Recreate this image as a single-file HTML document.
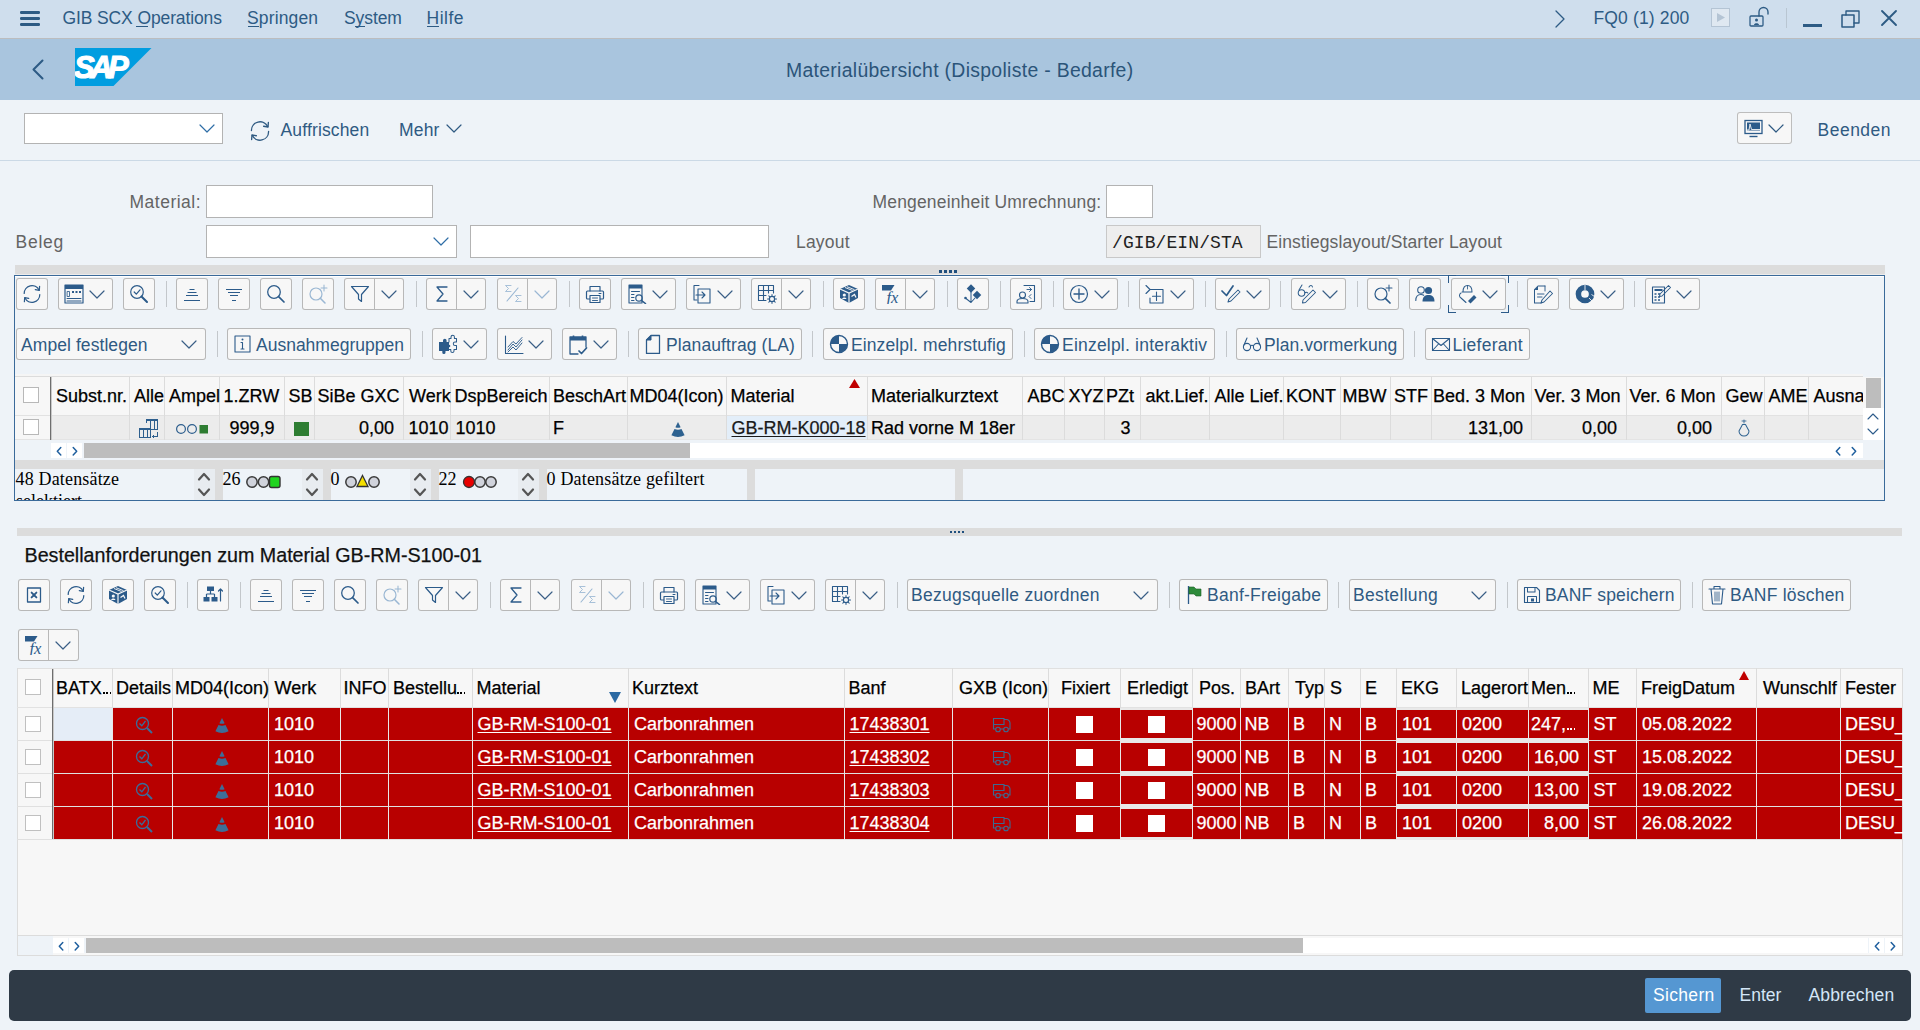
<!DOCTYPE html>
<html><head><meta charset="utf-8"><style>*{margin:0;padding:0;box-sizing:border-box}
html,body{width:1920px;height:1030px;overflow:hidden;background:#eef3f8;font-family:"Liberation Sans",sans-serif}
.a{position:absolute}
.t{position:absolute;white-space:pre;line-height:1}
.b{-webkit-text-stroke:0.25px currentColor}
.u{text-decoration:underline;text-underline-offset:2px}
</style></head><body>
<div class="a" style="left:0px;top:0px;width:1920px;height:38px;background:#cfdeed;"></div>
<div class="a" style="left:0px;top:38px;width:1920px;height:1px;background:#bcbdbf;"></div>
<div class="a" style="left:0px;top:39px;width:1920px;height:61px;background:#a9c5de;"></div>
<div class="a" style="left:20px;top:11px;width:20px;height:2.5px;background:#2d5b84;border-radius:1.2px;"></div>
<div class="a" style="left:20px;top:17px;width:20px;height:2.5px;background:#2d5b84;border-radius:1.2px;"></div>
<div class="a" style="left:20px;top:23px;width:20px;height:2.5px;background:#2d5b84;border-radius:1.2px;"></div>
<div class="t " style="left:62.50px;top:10.19px;font-size:17.5px;color:#2d5b84;letter-spacing:-0.118px;">GIB SCX Operations</div>
<div class="t " style="left:247.00px;top:10.19px;font-size:17.5px;color:#2d5b84;letter-spacing:0.143px;">Springen</div>
<div class="t " style="left:344.00px;top:10.19px;font-size:17.5px;color:#2d5b84;letter-spacing:-0.080px;">System</div>
<div class="t " style="left:426.50px;top:10.19px;font-size:17.5px;color:#2d5b84;letter-spacing:0.500px;">Hilfe</div>
<div class="a" style="left:136px;top:26px;width:12px;height:1px;background:#2d5b84;"></div>
<div class="a" style="left:248px;top:26px;width:11px;height:1px;background:#2d5b84;"></div>
<div class="a" style="left:355px;top:26px;width:10px;height:1px;background:#2d5b84;"></div>
<div class="a" style="left:427px;top:26px;width:12px;height:1px;background:#2d5b84;"></div>
<svg class="a" style="left:1554px;top:9px;" width="12" height="20" viewBox="0 0 12 20"><path d="M2 2L10 10L2 18" fill="none" stroke="#2d5b84" stroke-width="1.27" stroke-linecap="round" stroke-linejoin="round"/></svg>
<div class="t " style="left:1593.50px;top:10.19px;font-size:17.5px;color:#2d5b84;letter-spacing:0.150px;">FQ0 (1) 200</div>
<svg class="a" style="left:1711px;top:8px;" width="20" height="20" viewBox="0 0 20 20"><rect x="0.5" y="0.5" width="18" height="18" fill="#dfe8f1" stroke="#b4c4d4"/><path d="M6 5L14 9.5L6 14Z" fill="#b4c4d4"/></svg>
<svg class="a" style="left:1749px;top:6px;" width="24" height="22" viewBox="0 0 24 22"><rect x="1" y="10" width="13" height="10" rx="1" fill="none" stroke="#2d5b84" stroke-width="1.27" stroke-linecap="round" stroke-linejoin="round"/><path d="M10 10V6A4.5 4.5 0 0 1 19 6V8" fill="none" stroke="#2d5b84" stroke-width="1.36" stroke-linecap="round" stroke-linejoin="round"/><circle cx="7.5" cy="14" r="1.5" fill="#2d5b84"/><path d="M5 19C5 16.5 10 16.5 10 19" fill="#2d5b84"/></svg>
<div class="a" style="left:1786px;top:8px;width:1px;height:20px;background:#b9c6d2;"></div>
<div class="a" style="left:1803px;top:24px;width:19px;height:3px;background:#2d5b84;"></div>
<svg class="a" style="left:1841px;top:8px;" width="20" height="20" viewBox="0 0 20 20"><rect x="1" y="7" width="12" height="12" fill="none" stroke="#2d5b84" stroke-width="1.53" stroke-linecap="round" stroke-linejoin="round"/><path d="M5 7V3H18V15H13" fill="none" stroke="#2d5b84" stroke-width="1.36" stroke-linecap="round" stroke-linejoin="round"/></svg>
<svg class="a" style="left:1880px;top:9px;" width="18" height="18" viewBox="0 0 18 18"><path d="M2 2L16 16M16 2L2 16" fill="none" stroke="#2d5b84" stroke-width="1.87" stroke-linecap="round" stroke-linejoin="round"/></svg>
<svg class="a" style="left:30px;top:58px;" width="16" height="24" viewBox="0 0 16 24"><path d="M12.5 2.5L3.5 11.5L12.5 20.5" fill="none" stroke="#2d5b84" stroke-width="2.04" stroke-linecap="round" stroke-linejoin="round"/></svg>
<svg class="a" style="left:75px;top:48px;" width="77" height="38" viewBox="0 0 77 38"><path d="M0 0H76.5L38.5 38H0Z" fill="#009de0"/><text x="-1" y="30" font-family="Liberation Sans" font-weight="bold" font-style="italic" font-size="31" letter-spacing="-4.5" fill="#fff" stroke="#fff" stroke-width="1.1">SAP</text></svg>
<div class="t " style="left:786.00px;top:60.58px;font-size:19.4px;color:#2b5479;letter-spacing:0.308px;">Materialübersicht (Dispoliste - Bedarfe)</div>
<div class="a" style="left:0px;top:160px;width:1920px;height:1px;background:#cbd9e6;"></div>
<div class="a" style="left:24px;top:113px;width:199px;height:31px;background:#fff;box-shadow:inset 0 0 0 1px #b3b3b3;"></div>
<svg class="a" style="left:199px;top:124px;" width="16" height="9" viewBox="0 0 16 9"><path d="M1 1 L8 8 L15 1" fill="none" stroke="#2f6ea6" stroke-width="1.19" stroke-linecap="round" stroke-linejoin="round"/></svg>
<svg class="a" style="left:249px;top:120px;" width="22" height="22" viewBox="0 0 20 20"><path d="M2.2 9.5A7.8 7.8 0 0 1 17 6" fill="none" stroke="#2f5a82" stroke-width="1.23" stroke-linecap="round" stroke-linejoin="round"/><path d="M17.6 2.3L17.3 6.4L13.3 5.7" fill="none" stroke="#2f5a82" stroke-width="1.23" stroke-linecap="round" stroke-linejoin="round"/><path d="M17.8 10.5A7.8 7.8 0 0 1 3 14" fill="none" stroke="#2f5a82" stroke-width="1.23" stroke-linecap="round" stroke-linejoin="round"/><path d="M2.4 17.7L2.7 13.6L6.7 14.3" fill="none" stroke="#2f5a82" stroke-width="1.23" stroke-linecap="round" stroke-linejoin="round"/></svg>
<div class="t " style="left:280.50px;top:121.69px;font-size:17.5px;color:#2f5a82;letter-spacing:0.150px;">Auffrischen</div>
<div class="t " style="left:399.00px;top:121.69px;font-size:17.5px;color:#2f5a82;letter-spacing:0.167px;">Mehr</div>
<svg class="a" style="left:446px;top:124px;" width="16" height="9" viewBox="0 0 16 9"><path d="M1 1 L8 8 L15 1" fill="none" stroke="#2f5a82" stroke-width="1.19" stroke-linecap="round" stroke-linejoin="round"/></svg>
<div class="a" style="left:1737px;top:112px;width:55px;height:32px;background:#f7f7f7;box-shadow:inset 0 0 0 1px #bdbdbd;border-radius:3px;"></div>
<svg class="a" style="left:1744px;top:119px;" width="20" height="20" viewBox="0 0 20 20"><rect x="1" y="1.5" width="17" height="13" fill="none" stroke="#2c5b8a" stroke-width="1.3"/><rect x="3" y="3.5" width="13" height="8" fill="#2c5b8a"/><path d="M2.5 11H5L6 5L7.5 10.5H16" fill="none" stroke="#f7f7f7" stroke-width="0.9"/><path d="M5.5 17.5H13.5" stroke="#2c5b8a" stroke-width="1.4"/></svg>
<svg class="a" style="left:1768px;top:124px;" width="16" height="9" viewBox="0 0 16 9"><path d="M1 1 L8 8 L15 1" fill="none" stroke="#2f5a82" stroke-width="1.19" stroke-linecap="round" stroke-linejoin="round"/></svg>
<div class="t " style="left:1817.50px;top:121.69px;font-size:17.5px;color:#2f5a82;letter-spacing:0.500px;">Beenden</div>
<div class="t " style="left:129.50px;top:194.19px;font-size:17.5px;color:#646464;letter-spacing:0.500px;">Material:</div>
<div class="a" style="left:206px;top:185px;width:227px;height:33px;background:#fff;box-shadow:inset 0 0 0 1px #b3b3b3;"></div>
<div class="t " style="left:872.50px;top:194.19px;font-size:17.5px;color:#646464;letter-spacing:0.167px;">Mengeneinheit Umrechnung:</div>
<div class="a" style="left:1106px;top:185px;width:47px;height:33px;background:#fff;box-shadow:inset 0 0 0 1px #b3b3b3;"></div>
<div class="t " style="left:15.50px;top:234.19px;font-size:17.5px;color:#646464;letter-spacing:0.750px;">Beleg</div>
<div class="a" style="left:206px;top:225px;width:251px;height:33px;background:#fff;box-shadow:inset 0 0 0 1px #b3b3b3;"></div>
<svg class="a" style="left:433px;top:237px;" width="16" height="9" viewBox="0 0 16 9"><path d="M1 1 L8 8 L15 1" fill="none" stroke="#2f6ea6" stroke-width="1.19" stroke-linecap="round" stroke-linejoin="round"/></svg>
<div class="a" style="left:470px;top:225px;width:299px;height:33px;background:#fff;box-shadow:inset 0 0 0 1px #b3b3b3;"></div>
<div class="t " style="left:796.00px;top:234.19px;font-size:17.5px;color:#646464;letter-spacing:0.200px;">Layout</div>
<div class="a" style="left:1106px;top:225px;width:155px;height:33px;background:#eeeeee;box-shadow:inset 0 0 0 1px #c8c8c8;"></div>
<div class="t " style="left:1112.00px;top:234.20px;font-size:18px;color:#222;font-family:'Liberation Mono';letter-spacing:0.091px;">/GIB/EIN/STA</div>
<div class="t " style="left:1266.50px;top:234.19px;font-size:17.5px;color:#646464;letter-spacing:0.103px;">Einstiegslayout/Starter Layout</div>
<div class="a" style="left:15px;top:265px;width:1870px;height:10px;background:#dcdcdc;"></div>
<div class="a" style="left:939px;top:270px;width:3px;height:3px;background:#1f4f7e;"></div>
<div class="a" style="left:944px;top:270px;width:3px;height:3px;background:#1f4f7e;"></div>
<div class="a" style="left:949px;top:270px;width:3px;height:3px;background:#1f4f7e;"></div>
<div class="a" style="left:954px;top:270px;width:3px;height:3px;background:#1f4f7e;"></div>
<div class="a" style="left:15px;top:274px;width:1870px;height:1px;background:#ececec;"></div>
<div class="a" style="left:14px;top:275px;width:1871px;height:226px;box-shadow:inset 0 0 0 1px #3a6a9a;"></div>
<div class="a" style="left:15px;top:276px;width:1869px;height:1px;background:#ffffff;"></div>
<div class="a" style="left:16px;top:278px;width:32px;height:32px;background:#f7f7f7;box-shadow:inset 0 0 0 1px #b8b8b8;border-radius:3px;"></div>
<svg class="a" style="left:22px;top:284px;" width="20" height="20" viewBox="0 0 20 20"><path d="M2.2 9.5A7.8 7.8 0 0 1 17 6" fill="none" stroke="#2c5b8a" stroke-width="1.23" stroke-linecap="round" stroke-linejoin="round"/><path d="M17.6 2.3L17.3 6.4L13.3 5.7" fill="none" stroke="#2c5b8a" stroke-width="1.23" stroke-linecap="round" stroke-linejoin="round"/><path d="M17.8 10.5A7.8 7.8 0 0 1 3 14" fill="none" stroke="#2c5b8a" stroke-width="1.23" stroke-linecap="round" stroke-linejoin="round"/><path d="M2.4 17.7L2.7 13.6L6.7 14.3" fill="none" stroke="#2c5b8a" stroke-width="1.23" stroke-linecap="round" stroke-linejoin="round"/></svg>
<div class="a" style="left:58px;top:278px;width:55px;height:32px;background:#f7f7f7;box-shadow:inset 0 0 0 1px #b8b8b8;border-radius:3px;"></div>
<svg class="a" style="left:64px;top:284px;" width="20" height="20" viewBox="0 0 20 20"><rect x="1" y="1" width="18" height="18" fill="none" stroke="#2c5b8a" stroke-width="1.19" stroke-linecap="round" stroke-linejoin="round"/><rect x="1" y="1" width="18" height="4" fill="#2c5b8a"/><rect x="3.5" y="7.5" width="2" height="5" fill="none" stroke="#2c5b8a" stroke-width="0.85" stroke-linecap="round" stroke-linejoin="round"/><rect x="8" y="7" width="2" height="2" fill="#2c5b8a"/><rect x="11.5" y="7" width="2" height="2" fill="#2c5b8a"/><rect x="15" y="7" width="2" height="2" fill="#2c5b8a"/><path d="M3 14.5H17M3 17H17" fill="none" stroke="#2c5b8a" stroke-width="1.02" stroke-linecap="round" stroke-linejoin="round"/></svg>
<svg class="a" style="left:89px;top:290px;" width="16" height="9" viewBox="0 0 16 9"><path d="M1 1 L8 8 L15 1" fill="none" stroke="#3a5f86" stroke-width="1.19" stroke-linecap="round" stroke-linejoin="round"/></svg>
<div class="a" style="left:123px;top:278px;width:32px;height:32px;background:#f7f7f7;box-shadow:inset 0 0 0 1px #b8b8b8;border-radius:3px;"></div>
<svg class="a" style="left:129px;top:284px;" width="20" height="20" viewBox="0 0 20 20"><circle cx="8" cy="8" r="6.3" fill="none" stroke="#2c5b8a" stroke-width="1.19" stroke-linecap="round" stroke-linejoin="round"/><path d="M5.2 8 L7.3 10.2 L11 5.8" fill="none" stroke="#2c5b8a" stroke-width="1.19" stroke-linecap="round" stroke-linejoin="round"/><path d="M12.5 12.5 L18 18" fill="none" stroke="#2c5b8a" stroke-width="2.04" stroke-linecap="round" stroke-linejoin="round"/></svg>
<div class="a" style="left:166px;top:281px;width:1px;height:26px;background:#c3c7cb;"></div>
<div class="a" style="left:176px;top:278px;width:32px;height:32px;background:#f7f7f7;box-shadow:inset 0 0 0 1px #b8b8b8;border-radius:3px;"></div>
<svg class="a" style="left:182px;top:284px;" width="20" height="20" viewBox="0 0 20 20"><path d="M7.5 5.5H12.5M5.5 8.5H14.5M4 11.5H16M2 16.5H18" fill="none" stroke="#2c5b8a" stroke-width="1.1"/></svg>
<div class="a" style="left:218px;top:278px;width:32px;height:32px;background:#f7f7f7;box-shadow:inset 0 0 0 1px #b8b8b8;border-radius:3px;"></div>
<svg class="a" style="left:224px;top:284px;" width="20" height="20" viewBox="0 0 20 20"><path d="M2 5.5H18M4 8.5H16M6 11.5H14M8 16.5H12" fill="none" stroke="#2c5b8a" stroke-width="1.1"/></svg>
<div class="a" style="left:260px;top:278px;width:32px;height:32px;background:#f7f7f7;box-shadow:inset 0 0 0 1px #b8b8b8;border-radius:3px;"></div>
<svg class="a" style="left:266px;top:284px;" width="20" height="20" viewBox="0 0 20 20"><circle cx="8" cy="8" r="6.3" fill="none" stroke="#2c5b8a" stroke-width="1.27" stroke-linecap="round" stroke-linejoin="round"/><path d="M12.6 12.6 L18 18" fill="none" stroke="#2c5b8a" stroke-width="1.70" stroke-linecap="round" stroke-linejoin="round"/></svg>
<div class="a" style="left:302px;top:278px;width:32px;height:32px;background:#f7f7f7;box-shadow:inset 0 0 0 1px #b8b8b8;border-radius:3px;"></div>
<svg class="a" style="left:308px;top:284px;" width="20" height="20" viewBox="0 0 20 20"><circle cx="8" cy="10" r="6" fill="none" stroke="#9ab7d3" stroke-width="1.19" stroke-linecap="round" stroke-linejoin="round"/><path d="M12.3 14.3 L17 19" fill="none" stroke="#9ab7d3" stroke-width="1.53" stroke-linecap="round" stroke-linejoin="round"/><path d="M16 1V7M13 4H19" fill="none" stroke="#9ab7d3" stroke-width="1.02" stroke-linecap="round" stroke-linejoin="round"/></svg>
<div class="a" style="left:344px;top:278px;width:60px;height:32px;background:#f7f7f7;box-shadow:inset 0 0 0 1px #b8b8b8;border-radius:3px;"></div>
<svg class="a" style="left:350px;top:284px;" width="20" height="20" viewBox="0 0 20 20"><path d="M1.5 2.5H18.5L11.5 10.5V17.5L8.5 15V10.5Z" fill="none" stroke="#2c5b8a" stroke-width="1.19" stroke-linecap="round" stroke-linejoin="round"/></svg>
<div class="a" style="left:374px;top:279px;width:1px;height:30px;background:#b8b8b8;"></div>
<svg class="a" style="left:381px;top:290px;" width="16" height="9" viewBox="0 0 16 9"><path d="M1 1 L8 8 L15 1" fill="none" stroke="#3a5f86" stroke-width="1.19" stroke-linecap="round" stroke-linejoin="round"/></svg>
<div class="a" style="left:416px;top:281px;width:1px;height:26px;background:#c3c7cb;"></div>
<div class="a" style="left:426px;top:278px;width:60px;height:32px;background:#f7f7f7;box-shadow:inset 0 0 0 1px #b8b8b8;border-radius:3px;"></div>
<svg class="a" style="left:432px;top:284px;" width="20" height="20" viewBox="0 0 20 20"><path d="M15 3H5L11 10L5 17H15" fill="none" stroke="#2c5b8a" stroke-width="1.27" stroke-linecap="round" stroke-linejoin="round"/></svg>
<div class="a" style="left:456px;top:279px;width:1px;height:30px;background:#b8b8b8;"></div>
<svg class="a" style="left:463px;top:290px;" width="16" height="9" viewBox="0 0 16 9"><path d="M1 1 L8 8 L15 1" fill="none" stroke="#3a5f86" stroke-width="1.19" stroke-linecap="round" stroke-linejoin="round"/></svg>
<div class="a" style="left:497px;top:278px;width:60px;height:32px;background:#f7f7f7;box-shadow:inset 0 0 0 1px #b8b8b8;border-radius:3px;"></div>
<svg class="a" style="left:503px;top:284px;" width="20" height="20" viewBox="0 0 20 20"><path d="M8 1.5H2.5L5.5 4.5L2.5 7.5H8" fill="none" stroke="#9ab7d3" stroke-width="0.85" stroke-linecap="round" stroke-linejoin="round"/><path d="M4 17L15 4" fill="none" stroke="#9ab7d3" stroke-width="1.10" stroke-linecap="round" stroke-linejoin="round"/><path d="M18 11.5H12.5L15.5 14.5L12.5 17.5H18" fill="none" stroke="#9ab7d3" stroke-width="0.85" stroke-linecap="round" stroke-linejoin="round"/></svg>
<div class="a" style="left:527px;top:279px;width:1px;height:30px;background:#b8b8b8;"></div>
<svg class="a" style="left:534px;top:290px;" width="16" height="9" viewBox="0 0 16 9"><path d="M1 1 L8 8 L15 1" fill="none" stroke="#9ab7d3" stroke-width="1.19" stroke-linecap="round" stroke-linejoin="round"/></svg>
<div class="a" style="left:569px;top:281px;width:1px;height:26px;background:#c3c7cb;"></div>
<div class="a" style="left:579px;top:278px;width:32px;height:32px;background:#f7f7f7;box-shadow:inset 0 0 0 1px #b8b8b8;border-radius:3px;"></div>
<svg class="a" style="left:585px;top:284px;" width="20" height="20" viewBox="0 0 20 20"><path d="M5 7V2.5H15V7" fill="none" stroke="#2c5b8a" stroke-width="1.19" stroke-linecap="round" stroke-linejoin="round"/><rect x="1.5" y="7" width="17" height="8" rx="1" fill="none" stroke="#2c5b8a" stroke-width="1.19" stroke-linecap="round" stroke-linejoin="round"/><rect x="5" y="11.5" width="10" height="7" fill="#f7f7f7" fill="none" stroke="#2c5b8a" stroke-width="1.19" stroke-linecap="round" stroke-linejoin="round"/><path d="M7.5 14H12.5M7.5 16.5H12.5" fill="none" stroke="#2c5b8a" stroke-width="0.94" stroke-linecap="round" stroke-linejoin="round"/><path d="M14 9.5H16" fill="none" stroke="#2c5b8a" stroke-width="1.02" stroke-linecap="round" stroke-linejoin="round"/></svg>
<div class="a" style="left:621px;top:278px;width:55px;height:32px;background:#f7f7f7;box-shadow:inset 0 0 0 1px #b8b8b8;border-radius:3px;"></div>
<svg class="a" style="left:627px;top:284px;" width="20" height="20" viewBox="0 0 20 20"><rect x="2" y="1" width="13" height="18" fill="none" stroke="#2c5b8a" stroke-width="1.10" stroke-linecap="round" stroke-linejoin="round"/><rect x="2" y="1" width="13" height="3.5" fill="#2c5b8a"/><path d="M4.5 7.5H12.5M4.5 10.5H7M4.5 13.5H7M4.5 16.5H7" fill="none" stroke="#2c5b8a" stroke-width="1.02" stroke-linecap="round" stroke-linejoin="round"/><circle cx="12" cy="14" r="3.2" fill="none" stroke="#2c5b8a" stroke-width="1.19" stroke-linecap="round" stroke-linejoin="round"/><path d="M14.3 16.3L18.5 19.5" fill="none" stroke="#2c5b8a" stroke-width="1.53" stroke-linecap="round" stroke-linejoin="round"/></svg>
<svg class="a" style="left:652px;top:290px;" width="16" height="9" viewBox="0 0 16 9"><path d="M1 1 L8 8 L15 1" fill="none" stroke="#3a5f86" stroke-width="1.19" stroke-linecap="round" stroke-linejoin="round"/></svg>
<div class="a" style="left:686px;top:278px;width:55px;height:32px;background:#f7f7f7;box-shadow:inset 0 0 0 1px #b8b8b8;border-radius:3px;"></div>
<svg class="a" style="left:692px;top:284px;" width="20" height="20" viewBox="0 0 20 20"><path d="M7 1.5H2V16H5" fill="none" stroke="#2c5b8a" stroke-width="1.10" stroke-linecap="round" stroke-linejoin="round"/><rect x="6" y="5" width="12" height="14" fill="none" stroke="#2c5b8a" stroke-width="1.10" stroke-linecap="round" stroke-linejoin="round"/><path d="M4 11H13M10 8L13 11L10 14" fill="none" stroke="#2c5b8a" stroke-width="1.10" stroke-linecap="round" stroke-linejoin="round"/></svg>
<svg class="a" style="left:717px;top:290px;" width="16" height="9" viewBox="0 0 16 9"><path d="M1 1 L8 8 L15 1" fill="none" stroke="#3a5f86" stroke-width="1.19" stroke-linecap="round" stroke-linejoin="round"/></svg>
<div class="a" style="left:751px;top:278px;width:60px;height:32px;background:#f7f7f7;box-shadow:inset 0 0 0 1px #b8b8b8;border-radius:3px;"></div>
<svg class="a" style="left:757px;top:284px;" width="20" height="20" viewBox="0 0 20 20"><path d="M1.5 1.5H16.5V9M1.5 1.5V16.5H9M1.5 6.5H16.5M1.5 11.5H9M6.5 1.5V16.5M11.5 1.5V9" fill="none" stroke="#2c5b8a" stroke-width="1.10" stroke-linecap="round" stroke-linejoin="round"/><circle cx="15" cy="15" r="2.6" fill="none" stroke="#2c5b8a" stroke-width="1.19" stroke-linecap="round" stroke-linejoin="round"/><path d="M15 10.5V11.8M15 18.2V19.5M10.5 15H11.8M18.2 15H19.5M11.8 11.8L12.7 12.7M17.3 17.3L18.2 18.2M11.8 18.2L12.7 17.3M17.3 12.7L18.2 11.8" fill="none" stroke="#2c5b8a" stroke-width="1.02" stroke-linecap="round" stroke-linejoin="round"/></svg>
<div class="a" style="left:781px;top:279px;width:1px;height:30px;background:#b8b8b8;"></div>
<svg class="a" style="left:788px;top:290px;" width="16" height="9" viewBox="0 0 16 9"><path d="M1 1 L8 8 L15 1" fill="none" stroke="#3a5f86" stroke-width="1.19" stroke-linecap="round" stroke-linejoin="round"/></svg>
<div class="a" style="left:823px;top:281px;width:1px;height:26px;background:#c3c7cb;"></div>
<div class="a" style="left:833px;top:278px;width:32px;height:32px;background:#f7f7f7;box-shadow:inset 0 0 0 1px #b8b8b8;border-radius:3px;"></div>
<svg class="a" style="left:839px;top:284px;" width="20" height="20" viewBox="0 0 20 20"><path d="M10 1L19 5V14L10 19L1 14V5Z" fill="#2c5b8a"/><path d="M1 5L10 9L19 5M10 9V19" fill="none" stroke="#f7f7f7" stroke-width="1.2"/><path d="M6 3.5L13.5 6.5M8 2.7L15.5 5.7" stroke="#f7f7f7" stroke-width="0.9"/><circle cx="5.3" cy="11" r="1.6" fill="#f7f7f7"/><path d="M3.2 15C3.2 13 7.4 13 7.4 15" fill="#f7f7f7"/><path d="M12.5 12.5L15.5 10.5L17 13.5" fill="none" stroke="#f7f7f7" stroke-width="1.2"/></svg>
<div class="a" style="left:875px;top:278px;width:60px;height:32px;background:#f7f7f7;box-shadow:inset 0 0 0 1px #b8b8b8;border-radius:3px;"></div>
<svg class="a" style="left:881px;top:284px;" width="20" height="20" viewBox="0 0 20 20"><path d="M1 1H13.5L10 6.5H1Z" fill="#2c5b8a"/><text x="5.5" y="18.5" font-family="Liberation Serif" font-style="italic" font-size="16.5" fill="#2c5b8a">fx</text></svg>
<div class="a" style="left:905px;top:279px;width:1px;height:30px;background:#b8b8b8;"></div>
<svg class="a" style="left:912px;top:290px;" width="16" height="9" viewBox="0 0 16 9"><path d="M1 1 L8 8 L15 1" fill="none" stroke="#3a5f86" stroke-width="1.19" stroke-linecap="round" stroke-linejoin="round"/></svg>
<div class="a" style="left:947px;top:281px;width:1px;height:26px;background:#c3c7cb;"></div>
<div class="a" style="left:957px;top:278px;width:32px;height:32px;background:#f7f7f7;box-shadow:inset 0 0 0 1px #b8b8b8;border-radius:3px;"></div>
<svg class="a" style="left:963px;top:284px;" width="20" height="20" viewBox="0 0 20 20"><rect x="5" y="1.5" width="6" height="6" transform="rotate(45 8 4.5)" fill="#2c5b8a"/><rect x="11" y="8" width="6" height="6" transform="rotate(45 14 11)" fill="#2c5b8a"/><path d="M8 8V18.5M8 18.5L3 14.5M8 18.5L12 14" fill="none" stroke="#2c5b8a" stroke-width="1.02" stroke-linecap="round" stroke-linejoin="round"/><circle cx="2.5" cy="14" r="1.3" fill="#2c5b8a"/></svg>
<div class="a" style="left:1000px;top:281px;width:1px;height:26px;background:#c3c7cb;"></div>
<div class="a" style="left:1010px;top:278px;width:32px;height:32px;background:#f7f7f7;box-shadow:inset 0 0 0 1px #b8b8b8;border-radius:3px;"></div>
<svg class="a" style="left:1016px;top:284px;" width="20" height="20" viewBox="0 0 20 20"><path d="M8 1.5H18.5V17.5H14" fill="none" stroke="#2c5b8a" stroke-width="1.10" stroke-linecap="round" stroke-linejoin="round"/><path d="M11 5.5H15.5M13.5 3.5L15.5 5.5L13.5 7.5M15 10.5L13 12.5L15 14.5" fill="none" stroke="#2c5b8a" stroke-width="0.94" stroke-linecap="round" stroke-linejoin="round"/><circle cx="6.5" cy="11" r="3" fill="none" stroke="#2c5b8a" stroke-width="1.10" stroke-linecap="round" stroke-linejoin="round"/><path d="M1 19V17.5C1 15.5 3 14.5 6.5 14.5C10 14.5 12 15.5 12 17.5V19Z" fill="none" stroke="#2c5b8a" stroke-width="1.10" stroke-linecap="round" stroke-linejoin="round"/></svg>
<div class="a" style="left:1053px;top:281px;width:1px;height:26px;background:#c3c7cb;"></div>
<div class="a" style="left:1063px;top:278px;width:55px;height:32px;background:#f7f7f7;box-shadow:inset 0 0 0 1px #b8b8b8;border-radius:3px;"></div>
<svg class="a" style="left:1069px;top:284px;" width="20" height="20" viewBox="0 0 20 20"><circle cx="10" cy="10" r="8.5" fill="none" stroke="#2c5b8a" stroke-width="1.19" stroke-linecap="round" stroke-linejoin="round"/><path d="M10 5V15M5 10H15" fill="none" stroke="#2c5b8a" stroke-width="1.36" stroke-linecap="round" stroke-linejoin="round"/></svg>
<svg class="a" style="left:1094px;top:290px;" width="16" height="9" viewBox="0 0 16 9"><path d="M1 1 L8 8 L15 1" fill="none" stroke="#3a5f86" stroke-width="1.19" stroke-linecap="round" stroke-linejoin="round"/></svg>
<div class="a" style="left:1128px;top:281px;width:1px;height:26px;background:#c3c7cb;"></div>
<div class="a" style="left:1139px;top:278px;width:55px;height:32px;background:#f7f7f7;box-shadow:inset 0 0 0 1px #b8b8b8;border-radius:3px;"></div>
<svg class="a" style="left:1145px;top:284px;" width="20" height="20" viewBox="0 0 20 20"><path d="M1 1.5L5 5.5L1 9.5M5 5.5H18V19H5V14" fill="none" stroke="#2c5b8a" stroke-width="1.10" stroke-linecap="round" stroke-linejoin="round"/><path d="M11.5 8V16.5M7.5 12.2H15.5" fill="none" stroke="#2c5b8a" stroke-width="1.10" stroke-linecap="round" stroke-linejoin="round"/></svg>
<svg class="a" style="left:1170px;top:290px;" width="16" height="9" viewBox="0 0 16 9"><path d="M1 1 L8 8 L15 1" fill="none" stroke="#3a5f86" stroke-width="1.19" stroke-linecap="round" stroke-linejoin="round"/></svg>
<div class="a" style="left:1205px;top:281px;width:1px;height:26px;background:#c3c7cb;"></div>
<div class="a" style="left:1215px;top:278px;width:55px;height:32px;background:#f7f7f7;box-shadow:inset 0 0 0 1px #b8b8b8;border-radius:3px;"></div>
<svg class="a" style="left:1221px;top:284px;" width="20" height="20" viewBox="0 0 20 20"><path d="M1 7L5.5 11.5L12 2" fill="none" stroke="#2c5b8a" stroke-width="1.70" stroke-linecap="round" stroke-linejoin="round"/><path d="M17 6L19 8L10 17L7 18L8 15Z" fill="none" stroke="#2c5b8a" stroke-width="1.02" stroke-linecap="round" stroke-linejoin="round"/></svg>
<svg class="a" style="left:1246px;top:290px;" width="16" height="9" viewBox="0 0 16 9"><path d="M1 1 L8 8 L15 1" fill="none" stroke="#3a5f86" stroke-width="1.19" stroke-linecap="round" stroke-linejoin="round"/></svg>
<div class="a" style="left:1280px;top:281px;width:1px;height:26px;background:#c3c7cb;"></div>
<div class="a" style="left:1291px;top:278px;width:55px;height:32px;background:#f7f7f7;box-shadow:inset 0 0 0 1px #b8b8b8;border-radius:3px;"></div>
<svg class="a" style="left:1297px;top:284px;" width="20" height="20" viewBox="0 0 20 20"><circle cx="4.5" cy="9" r="3.3" fill="none" stroke="#2c5b8a" stroke-width="1.02" stroke-linecap="round" stroke-linejoin="round"/><path d="M7.8 9C8.5 8 10 8 10.8 9" fill="none" stroke="#2c5b8a" stroke-width="1.02" stroke-linecap="round" stroke-linejoin="round"/><path d="M2 6L5 1M12 3C13 1 15 1 15.5 3" fill="none" stroke="#2c5b8a" stroke-width="1.02" stroke-linecap="round" stroke-linejoin="round"/><path d="M16 6L18.5 8.5L8.5 18.5L5.5 19L6 16Z" fill="none" stroke="#2c5b8a" stroke-width="1.02" stroke-linecap="round" stroke-linejoin="round"/></svg>
<svg class="a" style="left:1322px;top:290px;" width="16" height="9" viewBox="0 0 16 9"><path d="M1 1 L8 8 L15 1" fill="none" stroke="#3a5f86" stroke-width="1.19" stroke-linecap="round" stroke-linejoin="round"/></svg>
<div class="a" style="left:1357px;top:281px;width:1px;height:26px;background:#c3c7cb;"></div>
<div class="a" style="left:1367px;top:278px;width:32px;height:32px;background:#f7f7f7;box-shadow:inset 0 0 0 1px #b8b8b8;border-radius:3px;"></div>
<svg class="a" style="left:1373px;top:284px;" width="20" height="20" viewBox="0 0 20 20"><circle cx="8" cy="10" r="6" fill="none" stroke="#2c5b8a" stroke-width="1.19" stroke-linecap="round" stroke-linejoin="round"/><path d="M12.3 14.3L17 19" fill="none" stroke="#2c5b8a" stroke-width="1.70" stroke-linecap="round" stroke-linejoin="round"/><path d="M16 1V7M13 4H19" fill="none" stroke="#2c5b8a" stroke-width="1.02" stroke-linecap="round" stroke-linejoin="round"/></svg>
<div class="a" style="left:1409px;top:278px;width:32px;height:32px;background:#f7f7f7;box-shadow:inset 0 0 0 1px #b8b8b8;border-radius:3px;"></div>
<svg class="a" style="left:1415px;top:284px;" width="20" height="20" viewBox="0 0 20 20"><circle cx="6" cy="6" r="3.3" fill="none" stroke="#2c5b8a" stroke-width="1.10" stroke-linecap="round" stroke-linejoin="round"/><path d="M0.8 16.5C0.8 12 3 10.5 6 10.5C7 10.5 8 10.8 8.7 11.3" fill="none" stroke="#2c5b8a" stroke-width="1.10" stroke-linecap="round" stroke-linejoin="round"/><circle cx="13.5" cy="6.5" r="3.6" fill="#2c5b8a"/><path d="M7.5 17.5C7.5 12.5 10 11 13.5 11C17 11 19.5 12.5 19.5 17.5Z" fill="#2c5b8a"/></svg>
<div class="a" style="left:1451px;top:278px;width:55px;height:32px;background:#f7f7f7;box-shadow:inset 0 0 0 1px #b8b8b8;border-radius:3px;"></div>
<svg class="a" style="left:1457px;top:284px;" width="20" height="20" viewBox="0 0 20 20"><path d="M6 8C6 3 8 1.5 10.5 1.5C13 1.5 15 3 15 8H5" fill="none" stroke="#2c5b8a" stroke-width="1.02" stroke-linecap="round" stroke-linejoin="round"/><path d="M10.5 1.5V5" fill="none" stroke="#2c5b8a" stroke-width="0.85" stroke-linecap="round" stroke-linejoin="round"/><path d="M4 9C2 10 2 13 4 14L9 18.5" fill="none" stroke="#2c5b8a" stroke-width="1.02" stroke-linecap="round" stroke-linejoin="round"/><path d="M11 17L17 11L19.5 13.5L13.5 19.5Z" fill="#2c5b8a"/></svg>
<svg class="a" style="left:1482px;top:290px;" width="16" height="9" viewBox="0 0 16 9"><path d="M1 1 L8 8 L15 1" fill="none" stroke="#3a5f86" stroke-width="1.19" stroke-linecap="round" stroke-linejoin="round"/></svg>
<svg class="a" style="left:1448px;top:275px;" width="8" height="8" viewBox="0 0 8 8"><path d="M0 8V0H8" fill="none" stroke="#2c5b8a" stroke-width="2"/></svg>
<svg class="a" style="left:1501px;top:275px;" width="8" height="8" viewBox="0 0 8 8"><path d="M0 0H8V8" fill="none" stroke="#2c5b8a" stroke-width="2"/></svg>
<svg class="a" style="left:1448px;top:305px;" width="8" height="8" viewBox="0 0 8 8"><path d="M0 0V8H8" fill="none" stroke="#2c5b8a" stroke-width="2"/></svg>
<svg class="a" style="left:1501px;top:305px;" width="8" height="8" viewBox="0 0 8 8"><path d="M8 0V8H0" fill="none" stroke="#2c5b8a" stroke-width="2"/></svg>
<div class="a" style="left:1517px;top:281px;width:1px;height:26px;background:#c3c7cb;"></div>
<div class="a" style="left:1527px;top:278px;width:32px;height:32px;background:#f7f7f7;box-shadow:inset 0 0 0 1px #b8b8b8;border-radius:3px;"></div>
<svg class="a" style="left:1533px;top:284px;" width="20" height="20" viewBox="0 0 20 20"><path d="M12 2H5L1.5 5.5V19H8" fill="none" stroke="#2c5b8a" stroke-width="1.02" stroke-linecap="round" stroke-linejoin="round"/><path d="M5 2V6H1.5Z" fill="#2c5b8a"/><path d="M4.5 10H11M4.5 13H9M12 2V7" fill="none" stroke="#2c5b8a" stroke-width="0.94" stroke-linecap="round" stroke-linejoin="round"/><path d="M17 7L19.5 9.5L11 18L8 19L9 16Z" fill="none" stroke="#2c5b8a" stroke-width="1.02" stroke-linecap="round" stroke-linejoin="round"/></svg>
<div class="a" style="left:1569px;top:278px;width:55px;height:32px;background:#f7f7f7;box-shadow:inset 0 0 0 1px #b8b8b8;border-radius:3px;"></div>
<svg class="a" style="left:1575px;top:284px;" width="20" height="20" viewBox="0 0 20 20"><circle cx="10" cy="10" r="6.6" fill="none" stroke="#2c5b8a" stroke-width="5.5"/><path d="M10 1V6M16.5 10.5L19.5 12.5M14 14L17 17" stroke="#f7f7f7" stroke-width="0.9"/></svg>
<svg class="a" style="left:1600px;top:290px;" width="16" height="9" viewBox="0 0 16 9"><path d="M1 1 L8 8 L15 1" fill="none" stroke="#3a5f86" stroke-width="1.19" stroke-linecap="round" stroke-linejoin="round"/></svg>
<div class="a" style="left:1634px;top:281px;width:1px;height:26px;background:#c3c7cb;"></div>
<div class="a" style="left:1645px;top:278px;width:55px;height:32px;background:#f7f7f7;box-shadow:inset 0 0 0 1px #b8b8b8;border-radius:3px;"></div>
<svg class="a" style="left:1651px;top:284px;" width="20" height="20" viewBox="0 0 20 20"><rect x="1.5" y="3" width="12" height="16" fill="none" stroke="#2c5b8a" stroke-width="1.10" stroke-linecap="round" stroke-linejoin="round"/><rect x="3.5" y="5" width="8" height="2" fill="#2c5b8a"/><path d="M3.5 10H5.5M7 10H9M3.5 13H5.5M7 13H9M3.5 16H5.5M7 16H9" stroke="#2c5b8a" stroke-width="1.6"/><path d="M17.5 1.5L19.5 3.5L11 12L8.5 12.5L9 10Z" fill="none" stroke="#2c5b8a" stroke-width="1.02" stroke-linecap="round" stroke-linejoin="round"/></svg>
<svg class="a" style="left:1676px;top:290px;" width="16" height="9" viewBox="0 0 16 9"><path d="M1 1 L8 8 L15 1" fill="none" stroke="#3a5f86" stroke-width="1.19" stroke-linecap="round" stroke-linejoin="round"/></svg>
<div class="a" style="left:16px;top:328px;width:190px;height:32px;background:#f7f7f7;box-shadow:inset 0 0 0 1px #b8b8b8;border-radius:3px;"></div>
<div class="t " style="left:21.00px;top:337.19px;font-size:17.5px;color:#2f5a82;letter-spacing:0.071px;">Ampel festlegen</div>
<svg class="a" style="left:181px;top:340px;" width="16" height="9" viewBox="0 0 16 9"><path d="M1 1 L8 8 L15 1" fill="none" stroke="#3a5f86" stroke-width="1.19" stroke-linecap="round" stroke-linejoin="round"/></svg>
<div class="a" style="left:217px;top:331px;width:1px;height:26px;background:#c3c7cb;"></div>
<div class="a" style="left:227px;top:328px;width:184px;height:32px;background:#f7f7f7;box-shadow:inset 0 0 0 1px #b8b8b8;border-radius:3px;"></div>
<svg class="a" style="left:234px;top:335px;" width="17" height="18" viewBox="0 0 17 18"><rect x="1" y="1" width="15" height="16" fill="none" stroke="#2c5b8a" stroke-width="1.10" stroke-linecap="round" stroke-linejoin="round"/><path d="M8.5 7.5V14M7 7.5H8.5M7 14H10" fill="none" stroke="#2c5b8a" stroke-width="1.10" stroke-linecap="round" stroke-linejoin="round"/><circle cx="8.5" cy="4.5" r="1" fill="#2c5b8a"/></svg>
<div class="t " style="left:256.00px;top:337.19px;font-size:17.5px;color:#2f5a82;">Ausnahmegruppen</div>
<div class="a" style="left:422px;top:331px;width:1px;height:26px;background:#c3c7cb;"></div>
<div class="a" style="left:432px;top:328px;width:55px;height:32px;background:#f7f7f7;box-shadow:inset 0 0 0 1px #b8b8b8;border-radius:3px;"></div>
<svg class="a" style="left:438px;top:333px;" width="22" height="22" viewBox="0 0 22 22"><path d="M1 9H5V7.5A1.8 1.8 0 0 1 8.6 7.5V9H11V18H7.5V19.5A1.6 1.6 0 0 1 4.3 19.5V18H1Z" fill="#2c5b8a"/><path d="M11 9V5.5H13V4A1.7 1.7 0 0 1 16.4 4V5.5H18.5V9H17A1.7 1.7 0 0 0 17 12.4H18.5V16.5H16V18A1.6 1.6 0 0 1 12.8 18V16.5H11" fill="none" stroke="#2c5b8a" stroke-width="1.02" stroke-linecap="round" stroke-linejoin="round"/><circle cx="11" cy="13" r="1.3" fill="#2c5b8a"/></svg>
<svg class="a" style="left:463px;top:340px;" width="16" height="9" viewBox="0 0 16 9"><path d="M1 1 L8 8 L15 1" fill="none" stroke="#3a5f86" stroke-width="1.19" stroke-linecap="round" stroke-linejoin="round"/></svg>
<div class="a" style="left:497px;top:328px;width:55px;height:32px;background:#f7f7f7;box-shadow:inset 0 0 0 1px #b8b8b8;border-radius:3px;"></div>
<svg class="a" style="left:504px;top:335px;" width="20" height="20" viewBox="0 0 20 20"><path d="M1.5 1V18.5H19" fill="none" stroke="#2c5b8a" stroke-width="1.10" stroke-linecap="round" stroke-linejoin="round"/><path d="M4 15L9 9L12 12L18 5M4 12L9 6.5L12 9L18 2.5M4 17L9 12L12 15L18 8" fill="none" stroke="#2c5b8a" stroke-width="0.94" stroke-linecap="round" stroke-linejoin="round"/></svg>
<svg class="a" style="left:528px;top:340px;" width="16" height="9" viewBox="0 0 16 9"><path d="M1 1 L8 8 L15 1" fill="none" stroke="#3a5f86" stroke-width="1.19" stroke-linecap="round" stroke-linejoin="round"/></svg>
<div class="a" style="left:562px;top:328px;width:55px;height:32px;background:#f7f7f7;box-shadow:inset 0 0 0 1px #b8b8b8;border-radius:3px;"></div>
<svg class="a" style="left:568px;top:334px;" width="20" height="21" viewBox="0 0 20 21"><path d="M10 20H2V3H18V13" fill="none" stroke="#2c5b8a" stroke-width="1.27" stroke-linecap="round" stroke-linejoin="round"/><rect x="2" y="3" width="16" height="3.5" fill="#2c5b8a"/><path d="M5.5 1.5V5M14.5 1.5V5" stroke="#2c5b8a" stroke-width="1.6"/><path d="M11 17L13.5 19.5L18.5 14" fill="none" stroke="#2c5b8a" stroke-width="1.70" stroke-linecap="round" stroke-linejoin="round"/></svg>
<svg class="a" style="left:593px;top:340px;" width="16" height="9" viewBox="0 0 16 9"><path d="M1 1 L8 8 L15 1" fill="none" stroke="#3a5f86" stroke-width="1.19" stroke-linecap="round" stroke-linejoin="round"/></svg>
<div class="a" style="left:628px;top:331px;width:1px;height:26px;background:#c3c7cb;"></div>
<div class="a" style="left:638px;top:328px;width:164px;height:32px;background:#f7f7f7;box-shadow:inset 0 0 0 1px #b8b8b8;border-radius:3px;"></div>
<svg class="a" style="left:644px;top:334px;" width="20" height="20" viewBox="0 0 20 20"><path d="M7 1.5H15.5V19.5H2.5V6Z" fill="none" stroke="#2c5b8a" stroke-width="1.27" stroke-linecap="round" stroke-linejoin="round"/><path d="M2.5 6L7 1.5V6Z" fill="#2c5b8a" stroke="#2c5b8a" stroke-width="1"/></svg>
<div class="t " style="left:666.00px;top:337.19px;font-size:17.5px;color:#2f5a82;letter-spacing:0.100px;">Planauftrag (LA)</div>
<div class="a" style="left:812px;top:331px;width:1px;height:26px;background:#c3c7cb;"></div>
<div class="a" style="left:823px;top:328px;width:190px;height:32px;background:#f7f7f7;box-shadow:inset 0 0 0 1px #b8b8b8;border-radius:3px;"></div>
<svg class="a" style="left:829px;top:334px;" width="20" height="20" viewBox="0 0 20 20"><circle cx="10" cy="10" r="8.5" fill="#f7f7f7" stroke="#2c5b8a" stroke-width="1.4"/><path d="M10 1.5A8.5 8.5 0 0 0 1.5 10H10Z" fill="#2c5b8a"/><path d="M10 10H18.5A8.5 8.5 0 0 1 10 18.5Z" fill="#2c5b8a"/></svg>
<div class="t " style="left:851.00px;top:337.19px;font-size:17.5px;color:#2f5a82;letter-spacing:0.105px;">Einzelpl. mehrstufig</div>
<div class="a" style="left:1024px;top:331px;width:1px;height:26px;background:#c3c7cb;"></div>
<div class="a" style="left:1034px;top:328px;width:181px;height:32px;background:#f7f7f7;box-shadow:inset 0 0 0 1px #b8b8b8;border-radius:3px;"></div>
<svg class="a" style="left:1040px;top:334px;" width="20" height="20" viewBox="0 0 20 20"><circle cx="10" cy="10" r="8.5" fill="#f7f7f7" stroke="#2c5b8a" stroke-width="1.4"/><path d="M10 1.5A8.5 8.5 0 0 0 1.5 10H10Z" fill="#2c5b8a"/><path d="M10 10H18.5A8.5 8.5 0 0 1 10 18.5Z" fill="#2c5b8a"/></svg>
<div class="t " style="left:1062.00px;top:337.19px;font-size:17.5px;color:#2f5a82;letter-spacing:0.211px;">Einzelpl. interaktiv</div>
<div class="a" style="left:1226px;top:331px;width:1px;height:26px;background:#c3c7cb;"></div>
<div class="a" style="left:1236px;top:328px;width:168px;height:32px;background:#f7f7f7;box-shadow:inset 0 0 0 1px #b8b8b8;border-radius:3px;"></div>
<svg class="a" style="left:1242px;top:334px;" width="20" height="20" viewBox="0 0 20 20"><circle cx="5" cy="13" r="3.6" fill="none" stroke="#2c5b8a" stroke-width="1.10" stroke-linecap="round" stroke-linejoin="round"/><circle cx="15" cy="13" r="3.6" fill="none" stroke="#2c5b8a" stroke-width="1.10" stroke-linecap="round" stroke-linejoin="round"/><path d="M8.5 12C9.3 11 10.7 11 11.5 12M2 11L5 4M18 11L15 4" fill="none" stroke="#2c5b8a" stroke-width="1.10" stroke-linecap="round" stroke-linejoin="round"/></svg>
<div class="t " style="left:1264.00px;top:337.19px;font-size:17.5px;color:#2f5a82;letter-spacing:0.071px;">Plan.vormerkung</div>
<div class="a" style="left:1414px;top:331px;width:1px;height:26px;background:#c3c7cb;"></div>
<div class="a" style="left:1425px;top:328px;width:105px;height:32px;background:#f7f7f7;box-shadow:inset 0 0 0 1px #b8b8b8;border-radius:3px;"></div>
<svg class="a" style="left:1431px;top:334px;" width="20" height="20" viewBox="0 0 20 20"><rect x="1.5" y="4.5" width="17" height="12" fill="none" stroke="#2c5b8a" stroke-width="1.10" stroke-linecap="round" stroke-linejoin="round"/><path d="M1.5 4.5L10 11.5L18.5 4.5M1.5 16.5L7.5 10M18.5 16.5L12.5 10" fill="none" stroke="#2c5b8a" stroke-width="1.10" stroke-linecap="round" stroke-linejoin="round"/></svg>
<div class="t " style="left:1452.50px;top:337.19px;font-size:17.5px;color:#2f5a82;letter-spacing:0.250px;">Lieferant</div>
<div class="a" style="left:15px;top:374px;width:1848px;height:2px;background:#f5f5f5;"></div>
<div class="a" style="left:15px;top:376px;width:1848px;height:1px;background:#dcdcdc;"></div>
<div class="a" style="left:15px;top:377px;width:1848px;height:38px;background:#f7f7f7;"></div>
<div class="a" style="left:15px;top:415px;width:1848px;height:25px;background:#ececec;"></div>
<div class="a" style="left:15px;top:415px;width:35px;height:25px;background:#f7f7f7;"></div>
<div class="a" style="left:15px;top:415px;width:1848px;height:1px;background:#e2e2e2;"></div>
<div class="a" style="left:15px;top:439px;width:1848px;height:1px;background:#e4e4e4;"></div>
<div class="a" style="left:727px;top:416px;width:140px;height:23px;background:#e3eef9;"></div>
<div class="a" style="left:129px;top:377px;width:1px;height:63px;background:#dcdcdc;"></div>
<div class="a" style="left:164px;top:377px;width:1px;height:63px;background:#dcdcdc;"></div>
<div class="a" style="left:219px;top:377px;width:1px;height:63px;background:#dcdcdc;"></div>
<div class="a" style="left:284px;top:377px;width:1px;height:63px;background:#dcdcdc;"></div>
<div class="a" style="left:314px;top:377px;width:1px;height:63px;background:#dcdcdc;"></div>
<div class="a" style="left:403px;top:377px;width:1px;height:63px;background:#dcdcdc;"></div>
<div class="a" style="left:450px;top:377px;width:1px;height:63px;background:#dcdcdc;"></div>
<div class="a" style="left:549px;top:377px;width:1px;height:63px;background:#dcdcdc;"></div>
<div class="a" style="left:627px;top:377px;width:1px;height:63px;background:#dcdcdc;"></div>
<div class="a" style="left:726px;top:377px;width:1px;height:63px;background:#dcdcdc;"></div>
<div class="a" style="left:867px;top:377px;width:1px;height:63px;background:#dcdcdc;"></div>
<div class="a" style="left:1022px;top:377px;width:1px;height:63px;background:#dcdcdc;"></div>
<div class="a" style="left:1064px;top:377px;width:1px;height:63px;background:#dcdcdc;"></div>
<div class="a" style="left:1104px;top:377px;width:1px;height:63px;background:#dcdcdc;"></div>
<div class="a" style="left:1140px;top:377px;width:1px;height:63px;background:#dcdcdc;"></div>
<div class="a" style="left:1209px;top:377px;width:1px;height:63px;background:#dcdcdc;"></div>
<div class="a" style="left:1283px;top:377px;width:1px;height:63px;background:#dcdcdc;"></div>
<div class="a" style="left:1340px;top:377px;width:1px;height:63px;background:#dcdcdc;"></div>
<div class="a" style="left:1390px;top:377px;width:1px;height:63px;background:#dcdcdc;"></div>
<div class="a" style="left:1431px;top:377px;width:1px;height:63px;background:#dcdcdc;"></div>
<div class="a" style="left:1531px;top:377px;width:1px;height:63px;background:#dcdcdc;"></div>
<div class="a" style="left:1626px;top:377px;width:1px;height:63px;background:#dcdcdc;"></div>
<div class="a" style="left:1721px;top:377px;width:1px;height:63px;background:#dcdcdc;"></div>
<div class="a" style="left:1764px;top:377px;width:1px;height:63px;background:#dcdcdc;"></div>
<div class="a" style="left:1808px;top:377px;width:1px;height:63px;background:#dcdcdc;"></div>
<div class="a" style="left:50px;top:377px;width:1px;height:63px;background:#6e6e6e;"></div>
<div class="a" style="left:51px;top:377px;width:1px;height:63px;background:#c8c8c8;"></div>
<div class="a" style="left:23px;top:387px;width:16px;height:16px;background:#fff;box-shadow:inset 0 0 0 1px #b8b8b8;"></div>
<div class="a" style="left:23px;top:419px;width:16px;height:16px;background:#fff;box-shadow:inset 0 0 0 1px #b8b8b8;"></div>
<div class="t b" style="left:56.00px;top:386.76px;font-size:18px;color:#000;">Subst.nr.</div>
<div class="t b" style="left:134.00px;top:386.76px;font-size:18px;color:#000;">Alle</div>
<div class="t b" style="left:169.00px;top:386.76px;font-size:18px;color:#000;">Ampel</div>
<div class="t b" style="left:223.50px;top:386.76px;font-size:18px;color:#000;">1.ZRW</div>
<div class="t b" style="left:288.50px;top:386.76px;font-size:18px;color:#000;">SB</div>
<div class="t b" style="left:317.50px;top:386.76px;font-size:18px;color:#000;">SiBe GXC</div>
<div class="t b" style="left:409.00px;top:386.76px;font-size:18px;color:#000;">Werk</div>
<div class="t b" style="left:454.50px;top:386.76px;font-size:18px;color:#000;">DspBereich</div>
<div class="t b" style="left:553.00px;top:386.76px;font-size:18px;color:#000;">BeschArt</div>
<div class="t b" style="left:629.50px;top:386.76px;font-size:18px;color:#000;">MD04(Icon)</div>
<div class="t b" style="left:730.50px;top:386.76px;font-size:18px;color:#000;">Material</div>
<div class="t b" style="left:871.00px;top:386.76px;font-size:18px;color:#000;">Materialkurztext</div>
<div class="t b" style="left:1027.50px;top:386.76px;font-size:18px;color:#000;">ABC</div>
<div class="t b" style="left:1068.50px;top:386.76px;font-size:18px;color:#000;">XYZ</div>
<div class="t b" style="left:1106.00px;top:386.76px;font-size:18px;color:#000;">PZt</div>
<div class="t b" style="left:1145.50px;top:386.76px;font-size:18px;color:#000;">akt.Lief.</div>
<div class="t b" style="left:1214.50px;top:386.76px;font-size:18px;color:#000;">Alle Lief.</div>
<div class="t b" style="left:1286.00px;top:386.76px;font-size:18px;color:#000;">KONT</div>
<div class="t b" style="left:1342.50px;top:386.76px;font-size:18px;color:#000;">MBW</div>
<div class="t b" style="left:1394.00px;top:386.76px;font-size:18px;color:#000;">STF</div>
<div class="t b" style="left:1433.00px;top:386.76px;font-size:18px;color:#000;">Bed. 3 Mon</div>
<div class="t b" style="left:1534.50px;top:386.76px;font-size:18px;color:#000;">Ver. 3 Mon</div>
<div class="t b" style="left:1629.50px;top:386.76px;font-size:18px;color:#000;">Ver. 6 Mon</div>
<div class="t b" style="left:1725.50px;top:386.76px;font-size:18px;color:#000;">Gew</div>
<div class="t b" style="left:1768.50px;top:386.76px;font-size:18px;color:#000;">AME</div>
<div class="t b" style="left:1813.50px;top:386.76px;font-size:18px;color:#000;">Ausna</div>
<svg class="a" style="left:849px;top:379px;" width="11" height="9" viewBox="0 0 11 9"><path d="M5.5 0L11 9H0Z" fill="#c00000"/></svg>
<svg class="a" style="left:139px;top:419px" width="20" height="20" shape-rendering="crispEdges"><rect x="7" y="0" width="12" height="2" fill="#2e5f8e"/><rect x="7" y="0" width="1" height="4" fill="#2e5f8e"/><rect x="18" y="0" width="1" height="11" fill="#2e5f8e"/><rect x="11" y="0" width="1" height="11" fill="#2e5f8e"/><rect x="15" y="0" width="1" height="11" fill="#2e5f8e"/><rect x="12" y="10" width="7" height="1" fill="#2e5f8e"/><rect x="0" y="9" width="12" height="2" fill="#2e5f8e"/><rect x="0" y="9" width="1" height="10" fill="#2e5f8e"/><rect x="11" y="9" width="1" height="10" fill="#2e5f8e"/><rect x="0" y="18" width="12" height="1" fill="#2e5f8e"/><rect x="4" y="11" width="1" height="7" fill="#2e5f8e"/><rect x="8" y="11" width="1" height="7" fill="#2e5f8e"/><rect x="18" y="13" width="1" height="5" fill="#2e5f8e"/><rect x="13" y="17" width="6" height="1" fill="#2e5f8e"/><rect x="14" y="16" width="1" height="3" fill="#2e5f8e"/></svg>
<svg class="a" style="left:176px;top:423px;" width="34" height="12" viewBox="0 0 34 12"><circle cx="5" cy="6" r="4.4" fill="none" stroke="#2e5f8e" stroke-width="1.2"/><circle cx="16" cy="6" r="4.4" fill="none" stroke="#2e5f8e" stroke-width="1.2"/><rect x="23.5" y="2" width="8.5" height="8.5" fill="#2e7d32"/></svg>
<div class="t b" style="left:229.50px;top:418.76px;font-size:18px;color:#000;">999,9</div>
<div class="a" style="left:294px;top:422px;width:15px;height:14px;background:#2e7d32;"></div>
<div class="t b" style="left:359.00px;top:418.76px;font-size:18px;color:#000;">0,00</div>
<div class="t b" style="left:408.50px;top:418.76px;font-size:18px;color:#000;">1010</div>
<div class="t b" style="left:455.50px;top:418.76px;font-size:18px;color:#000;">1010</div>
<div class="t b" style="left:553.00px;top:418.76px;font-size:18px;color:#000;">F</div>
<svg class="a" style="left:670px;top:421px;" width="16" height="17" viewBox="0 0 16 17"><path d="M8 1L10.6 6.2Q8 7.2 5.4 6.2Z" fill="#2e6290"/><path d="M4.5 8Q8 9.6 11.5 8L14.6 14.2Q8 17.8 1.4 14.2Z" fill="#2e6290"/></svg>
<div class="t u b" style="left:731.50px;top:418.76px;font-size:18px;color:#1a1a1a;">GB-RM-K000-18</div>
<div class="t b" style="left:871.00px;top:418.76px;font-size:18px;color:#000;">Rad vorne M 18er</div>
<div class="t b" style="left:1120.50px;top:418.76px;font-size:18px;color:#000;">3</div>
<div class="t b" style="left:1468.00px;top:418.76px;font-size:18px;color:#000;">131,00</div>
<div class="t b" style="left:1582.00px;top:418.76px;font-size:18px;color:#000;">0,00</div>
<div class="t b" style="left:1677.00px;top:418.76px;font-size:18px;color:#000;">0,00</div>
<svg class="a" style="left:1737px;top:419px;" width="14" height="19" viewBox="0 0 14 19"><path d="M7 1V4M5 2H9" fill="none" stroke="#2e6290" stroke-width="0.85" stroke-linecap="round" stroke-linejoin="round"/><path d="M5.5 5.5H8.5L12 12A5 5 0 1 1 2 12Z" fill="none" stroke="#2e6290" stroke-width="1.02" stroke-linecap="round" stroke-linejoin="round"/></svg>
<div class="a" style="left:1863px;top:377px;width:21px;height:63px;background:#f7f7f7;"></div>
<div class="a" style="left:1866px;top:378px;width:15px;height:30px;background:#bdbdbd;"></div>
<div class="a" style="left:1863px;top:408px;width:21px;height:32px;background:#ffffff;"></div>
<svg class="a" style="left:1867px;top:412px;" width="12" height="8" viewBox="0 0 12 8"><path d="M1 7L6 2L11 7" fill="none" stroke="#2c5b8a" stroke-width="1.10" stroke-linecap="round" stroke-linejoin="round"/></svg>
<svg class="a" style="left:1867px;top:428px;" width="12" height="8" viewBox="0 0 12 8"><path d="M1 1L6 6L11 1" fill="none" stroke="#2c5b8a" stroke-width="1.10" stroke-linecap="round" stroke-linejoin="round"/></svg>
<div class="a" style="left:51px;top:443px;width:1812px;height:15px;background:#ffffff;"></div>
<div class="a" style="left:84px;top:443px;width:606px;height:15px;background:#bdbdbd;"></div>
<div class="a" style="left:66px;top:443px;width:1px;height:15px;background:#eef3f8;"></div>
<div class="a" style="left:82px;top:443px;width:2px;height:15px;background:#eef3f8;"></div>
<svg class="a" style="left:55px;top:446px;" width="8" height="10" viewBox="0 0 8 10"><path d="M5.8 1.5L2.3 5.2L5.8 8.9" fill="none" stroke="#1f5f9e" stroke-width="1.49" stroke-linecap="round" stroke-linejoin="round"/></svg>
<svg class="a" style="left:71px;top:446px;" width="8" height="10" viewBox="0 0 8 10"><path d="M2.2 1.5L5.7 5.2L2.2 8.9" fill="none" stroke="#1f5f9e" stroke-width="1.49" stroke-linecap="round" stroke-linejoin="round"/></svg>
<svg class="a" style="left:1834px;top:446px;" width="8" height="10" viewBox="0 0 8 10"><path d="M5.8 1.5L2.3 5.2L5.8 8.9" fill="none" stroke="#1f5f9e" stroke-width="1.49" stroke-linecap="round" stroke-linejoin="round"/></svg>
<svg class="a" style="left:1850px;top:446px;" width="8" height="10" viewBox="0 0 8 10"><path d="M2.2 1.5L5.7 5.2L2.2 8.9" fill="none" stroke="#1f5f9e" stroke-width="1.49" stroke-linecap="round" stroke-linejoin="round"/></svg>
<div class="a" style="left:15px;top:460px;width:1869px;height:9px;background:#dcdcdc;"></div>
<div class="a" style="left:215px;top:469px;width:8px;height:31px;background:#dcdcdc;"></div>
<div class="a" style="left:323px;top:469px;width:8px;height:31px;background:#dcdcdc;"></div>
<div class="a" style="left:431px;top:469px;width:8px;height:31px;background:#dcdcdc;"></div>
<div class="a" style="left:539px;top:469px;width:8px;height:31px;background:#dcdcdc;"></div>
<div class="a" style="left:747px;top:469px;width:8px;height:31px;background:#dcdcdc;"></div>
<div class="a" style="left:955px;top:469px;width:8px;height:31px;background:#dcdcdc;"></div>
<div class="a" style="left:194px;top:469px;width:21px;height:31px;background:#e8ecf0;"></div>
<svg class="a" style="left:197px;top:471px;" width="14" height="11" viewBox="0 0 14 11"><path d="M2 8.5L7 3L12 8.5" fill="none" stroke="#555" stroke-width="2.21" stroke-linecap="round" stroke-linejoin="round"/></svg>
<svg class="a" style="left:197px;top:487px;" width="14" height="11" viewBox="0 0 14 11"><path d="M2 2.5L7 8L12 2.5" fill="none" stroke="#555" stroke-width="2.21" stroke-linecap="round" stroke-linejoin="round"/></svg>
<div class="a" style="left:302px;top:469px;width:21px;height:31px;background:#e8ecf0;"></div>
<svg class="a" style="left:305px;top:471px;" width="14" height="11" viewBox="0 0 14 11"><path d="M2 8.5L7 3L12 8.5" fill="none" stroke="#555" stroke-width="2.21" stroke-linecap="round" stroke-linejoin="round"/></svg>
<svg class="a" style="left:305px;top:487px;" width="14" height="11" viewBox="0 0 14 11"><path d="M2 2.5L7 8L12 2.5" fill="none" stroke="#555" stroke-width="2.21" stroke-linecap="round" stroke-linejoin="round"/></svg>
<div class="a" style="left:410px;top:469px;width:21px;height:31px;background:#e8ecf0;"></div>
<svg class="a" style="left:413px;top:471px;" width="14" height="11" viewBox="0 0 14 11"><path d="M2 8.5L7 3L12 8.5" fill="none" stroke="#555" stroke-width="2.21" stroke-linecap="round" stroke-linejoin="round"/></svg>
<svg class="a" style="left:413px;top:487px;" width="14" height="11" viewBox="0 0 14 11"><path d="M2 2.5L7 8L12 2.5" fill="none" stroke="#555" stroke-width="2.21" stroke-linecap="round" stroke-linejoin="round"/></svg>
<div class="a" style="left:518px;top:469px;width:21px;height:31px;background:#e8ecf0;"></div>
<svg class="a" style="left:521px;top:471px;" width="14" height="11" viewBox="0 0 14 11"><path d="M2 8.5L7 3L12 8.5" fill="none" stroke="#555" stroke-width="2.21" stroke-linecap="round" stroke-linejoin="round"/></svg>
<svg class="a" style="left:521px;top:487px;" width="14" height="11" viewBox="0 0 14 11"><path d="M2 2.5L7 8L12 2.5" fill="none" stroke="#555" stroke-width="2.21" stroke-linecap="round" stroke-linejoin="round"/></svg>
<div class="t " style="left:15.50px;top:469.93px;font-size:18px;color:#000;font-family:'Liberation Serif';letter-spacing:0.167px;">48 Datensätze</div>
<div class="a" style="left:15px;top:469px;width:179px;height:31px;overflow:hidden"><div class="t" style="left:1px;top:23px;font-family:'Liberation Serif';font-size:18px;color:#000">selektiert</div></div>
<div class="t " style="left:222.50px;top:469.93px;font-size:18px;color:#000;font-family:'Liberation Serif';">26</div>
<svg class="a" style="left:246px;top:474px;" width="36" height="15" viewBox="0 0 36 15"><circle cx="6" cy="8" r="5.2" fill="#d0d3dc" stroke="#3a3a3a" stroke-width="1.5"/><circle cx="17.5" cy="8" r="5.2" fill="#d0d3dc" stroke="#3a3a3a" stroke-width="1.5"/><rect x="23.5" y="2.5" width="10.5" height="11" rx="2" fill="#1fd41f" stroke="#333" stroke-width="1.4"/></svg>
<div class="t " style="left:330.50px;top:469.93px;font-size:18px;color:#000;font-family:'Liberation Serif';">0</div>
<svg class="a" style="left:345px;top:474px;" width="36" height="15" viewBox="0 0 36 15"><circle cx="6" cy="8" r="5.2" fill="#d0d3dc" stroke="#3a3a3a" stroke-width="1.5"/><circle cx="29" cy="8" r="5.2" fill="#d0d3dc" stroke="#3a3a3a" stroke-width="1.5"/><path d="M17.5 1.5L23 12.5H12Z" fill="#f5e000" stroke="#333" stroke-width="1.3"/></svg>
<div class="t " style="left:438.50px;top:469.93px;font-size:18px;color:#000;font-family:'Liberation Serif';">22</div>
<svg class="a" style="left:462px;top:474px;" width="36" height="15" viewBox="0 0 36 15"><circle cx="29" cy="8" r="5.2" fill="#d0d3dc" stroke="#3a3a3a" stroke-width="1.5"/><circle cx="18" cy="8" r="5.2" fill="#d0d3dc" stroke="#3a3a3a" stroke-width="1.5"/><circle cx="7" cy="8" r="5.5" fill="#e80000" stroke="#333" stroke-width="1.3"/></svg>
<div class="t " style="left:546.50px;top:469.93px;font-size:18px;color:#000;font-family:'Liberation Serif';letter-spacing:0.190px;">0 Datensätze gefiltert</div>
<div class="a" style="left:17px;top:528px;width:1885px;height:8px;background:#dcdcdc;"></div>
<div class="a" style="left:950px;top:531px;width:2px;height:2px;background:#1f4f7e;"></div>
<div class="a" style="left:954px;top:531px;width:2px;height:2px;background:#1f4f7e;"></div>
<div class="a" style="left:958px;top:531px;width:2px;height:2px;background:#1f4f7e;"></div>
<div class="a" style="left:962px;top:531px;width:2px;height:2px;background:#1f4f7e;"></div>
<div class="t b" style="left:24.50px;top:546.32px;font-size:19.7px;color:#111;">Bestellanforderungen zum Material GB-RM-S100-01</div>
<div class="a" style="left:18px;top:579px;width:32px;height:32px;background:#f7f7f7;box-shadow:inset 0 0 0 1px #b8b8b8;border-radius:3px;"></div>
<svg class="a" style="left:24px;top:585px;" width="20" height="20" viewBox="0 0 20 20"><rect x="3.5" y="3" width="13" height="14" fill="none" stroke="#2c5b8a" stroke-width="1.27" stroke-linecap="round" stroke-linejoin="round"/><path d="M7.6 7.6L12.4 12.4M12.4 7.6L7.6 12.4" fill="none" stroke="#2c5b8a" stroke-width="1.87" stroke-linecap="round" stroke-linejoin="round"/></svg>
<div class="a" style="left:60px;top:579px;width:32px;height:32px;background:#f7f7f7;box-shadow:inset 0 0 0 1px #b8b8b8;border-radius:3px;"></div>
<svg class="a" style="left:66px;top:585px;" width="20" height="20" viewBox="0 0 20 20"><path d="M2.2 9.5A7.8 7.8 0 0 1 17 6" fill="none" stroke="#2c5b8a" stroke-width="1.23" stroke-linecap="round" stroke-linejoin="round"/><path d="M17.6 2.3L17.3 6.4L13.3 5.7" fill="none" stroke="#2c5b8a" stroke-width="1.23" stroke-linecap="round" stroke-linejoin="round"/><path d="M17.8 10.5A7.8 7.8 0 0 1 3 14" fill="none" stroke="#2c5b8a" stroke-width="1.23" stroke-linecap="round" stroke-linejoin="round"/><path d="M2.4 17.7L2.7 13.6L6.7 14.3" fill="none" stroke="#2c5b8a" stroke-width="1.23" stroke-linecap="round" stroke-linejoin="round"/></svg>
<div class="a" style="left:102px;top:579px;width:32px;height:32px;background:#f7f7f7;box-shadow:inset 0 0 0 1px #b8b8b8;border-radius:3px;"></div>
<svg class="a" style="left:108px;top:585px;" width="20" height="20" viewBox="0 0 20 20"><path d="M10 1L19 5V14L10 19L1 14V5Z" fill="#2c5b8a"/><path d="M1 5L10 9L19 5M10 9V19" fill="none" stroke="#f7f7f7" stroke-width="1.2"/><path d="M6 3.5L13.5 6.5M8 2.7L15.5 5.7" stroke="#f7f7f7" stroke-width="0.9"/><circle cx="5.3" cy="11" r="1.6" fill="#f7f7f7"/><path d="M3.2 15C3.2 13 7.4 13 7.4 15" fill="#f7f7f7"/><path d="M12.5 12.5L15.5 10.5L17 13.5" fill="none" stroke="#f7f7f7" stroke-width="1.2"/></svg>
<div class="a" style="left:144px;top:579px;width:32px;height:32px;background:#f7f7f7;box-shadow:inset 0 0 0 1px #b8b8b8;border-radius:3px;"></div>
<svg class="a" style="left:150px;top:585px;" width="20" height="20" viewBox="0 0 20 20"><circle cx="8" cy="8" r="6.3" fill="none" stroke="#2c5b8a" stroke-width="1.19" stroke-linecap="round" stroke-linejoin="round"/><path d="M5.2 8 L7.3 10.2 L11 5.8" fill="none" stroke="#2c5b8a" stroke-width="1.19" stroke-linecap="round" stroke-linejoin="round"/><path d="M12.5 12.5 L18 18" fill="none" stroke="#2c5b8a" stroke-width="2.04" stroke-linecap="round" stroke-linejoin="round"/></svg>
<div class="a" style="left:187px;top:582px;width:1px;height:26px;background:#c3c7cb;"></div>
<div class="a" style="left:197px;top:579px;width:32px;height:32px;background:#f7f7f7;box-shadow:inset 0 0 0 1px #b8b8b8;border-radius:3px;"></div>
<svg class="a" style="left:203px;top:585px;" width="20" height="20" viewBox="0 0 20 20"><rect x="4" y="1.5" width="7" height="4.5" fill="#2c5b8a"/><rect x="0.5" y="12" width="6" height="4.5" fill="#2c5b8a"/><rect x="8.5" y="12" width="6" height="4.5" fill="#2c5b8a"/><path d="M7.5 6V9M3.5 9H11.5M3.5 9V12M11.5 9V12" fill="none" stroke="#2c5b8a" stroke-width="1.2"/><path d="M17.5 16V4M15.5 6L17.5 4L19.5 6" fill="none" stroke="#2c5b8a" stroke-width="1.19" stroke-linecap="round" stroke-linejoin="round"/></svg>
<div class="a" style="left:240px;top:582px;width:1px;height:26px;background:#c3c7cb;"></div>
<div class="a" style="left:250px;top:579px;width:32px;height:32px;background:#f7f7f7;box-shadow:inset 0 0 0 1px #b8b8b8;border-radius:3px;"></div>
<svg class="a" style="left:256px;top:585px;" width="20" height="20" viewBox="0 0 20 20"><path d="M7.5 5.5H12.5M5.5 8.5H14.5M4 11.5H16M2 16.5H18" fill="none" stroke="#2c5b8a" stroke-width="1.1"/></svg>
<div class="a" style="left:292px;top:579px;width:32px;height:32px;background:#f7f7f7;box-shadow:inset 0 0 0 1px #b8b8b8;border-radius:3px;"></div>
<svg class="a" style="left:298px;top:585px;" width="20" height="20" viewBox="0 0 20 20"><path d="M2 5.5H18M4 8.5H16M6 11.5H14M8 16.5H12" fill="none" stroke="#2c5b8a" stroke-width="1.1"/></svg>
<div class="a" style="left:334px;top:579px;width:32px;height:32px;background:#f7f7f7;box-shadow:inset 0 0 0 1px #b8b8b8;border-radius:3px;"></div>
<svg class="a" style="left:340px;top:585px;" width="20" height="20" viewBox="0 0 20 20"><circle cx="8" cy="8" r="6.3" fill="none" stroke="#2c5b8a" stroke-width="1.27" stroke-linecap="round" stroke-linejoin="round"/><path d="M12.6 12.6 L18 18" fill="none" stroke="#2c5b8a" stroke-width="1.70" stroke-linecap="round" stroke-linejoin="round"/></svg>
<div class="a" style="left:376px;top:579px;width:32px;height:32px;background:#f7f7f7;box-shadow:inset 0 0 0 1px #b8b8b8;border-radius:3px;"></div>
<svg class="a" style="left:382px;top:585px;" width="20" height="20" viewBox="0 0 20 20"><circle cx="8" cy="10" r="6" fill="none" stroke="#9ab7d3" stroke-width="1.19" stroke-linecap="round" stroke-linejoin="round"/><path d="M12.3 14.3 L17 19" fill="none" stroke="#9ab7d3" stroke-width="1.53" stroke-linecap="round" stroke-linejoin="round"/><path d="M16 1V7M13 4H19" fill="none" stroke="#9ab7d3" stroke-width="1.02" stroke-linecap="round" stroke-linejoin="round"/></svg>
<div class="a" style="left:418px;top:579px;width:60px;height:32px;background:#f7f7f7;box-shadow:inset 0 0 0 1px #b8b8b8;border-radius:3px;"></div>
<svg class="a" style="left:424px;top:585px;" width="20" height="20" viewBox="0 0 20 20"><path d="M1.5 2.5H18.5L11.5 10.5V17.5L8.5 15V10.5Z" fill="none" stroke="#2c5b8a" stroke-width="1.19" stroke-linecap="round" stroke-linejoin="round"/></svg>
<div class="a" style="left:448px;top:580px;width:1px;height:30px;background:#b8b8b8;"></div>
<svg class="a" style="left:455px;top:591px;" width="16" height="9" viewBox="0 0 16 9"><path d="M1 1 L8 8 L15 1" fill="none" stroke="#3a5f86" stroke-width="1.19" stroke-linecap="round" stroke-linejoin="round"/></svg>
<div class="a" style="left:490px;top:582px;width:1px;height:26px;background:#c3c7cb;"></div>
<div class="a" style="left:500px;top:579px;width:60px;height:32px;background:#f7f7f7;box-shadow:inset 0 0 0 1px #b8b8b8;border-radius:3px;"></div>
<svg class="a" style="left:506px;top:585px;" width="20" height="20" viewBox="0 0 20 20"><path d="M15 3H5L11 10L5 17H15" fill="none" stroke="#2c5b8a" stroke-width="1.27" stroke-linecap="round" stroke-linejoin="round"/></svg>
<div class="a" style="left:530px;top:580px;width:1px;height:30px;background:#b8b8b8;"></div>
<svg class="a" style="left:537px;top:591px;" width="16" height="9" viewBox="0 0 16 9"><path d="M1 1 L8 8 L15 1" fill="none" stroke="#3a5f86" stroke-width="1.19" stroke-linecap="round" stroke-linejoin="round"/></svg>
<div class="a" style="left:571px;top:579px;width:60px;height:32px;background:#f7f7f7;box-shadow:inset 0 0 0 1px #b8b8b8;border-radius:3px;"></div>
<svg class="a" style="left:577px;top:585px;" width="20" height="20" viewBox="0 0 20 20"><path d="M8 1.5H2.5L5.5 4.5L2.5 7.5H8" fill="none" stroke="#9ab7d3" stroke-width="0.85" stroke-linecap="round" stroke-linejoin="round"/><path d="M4 17L15 4" fill="none" stroke="#9ab7d3" stroke-width="1.10" stroke-linecap="round" stroke-linejoin="round"/><path d="M18 11.5H12.5L15.5 14.5L12.5 17.5H18" fill="none" stroke="#9ab7d3" stroke-width="0.85" stroke-linecap="round" stroke-linejoin="round"/></svg>
<div class="a" style="left:601px;top:580px;width:1px;height:30px;background:#b8b8b8;"></div>
<svg class="a" style="left:608px;top:591px;" width="16" height="9" viewBox="0 0 16 9"><path d="M1 1 L8 8 L15 1" fill="none" stroke="#9ab7d3" stroke-width="1.19" stroke-linecap="round" stroke-linejoin="round"/></svg>
<div class="a" style="left:643px;top:582px;width:1px;height:26px;background:#c3c7cb;"></div>
<div class="a" style="left:653px;top:579px;width:32px;height:32px;background:#f7f7f7;box-shadow:inset 0 0 0 1px #b8b8b8;border-radius:3px;"></div>
<svg class="a" style="left:659px;top:585px;" width="20" height="20" viewBox="0 0 20 20"><path d="M5 7V2.5H15V7" fill="none" stroke="#2c5b8a" stroke-width="1.19" stroke-linecap="round" stroke-linejoin="round"/><rect x="1.5" y="7" width="17" height="8" rx="1" fill="none" stroke="#2c5b8a" stroke-width="1.19" stroke-linecap="round" stroke-linejoin="round"/><rect x="5" y="11.5" width="10" height="7" fill="#f7f7f7" fill="none" stroke="#2c5b8a" stroke-width="1.19" stroke-linecap="round" stroke-linejoin="round"/><path d="M7.5 14H12.5M7.5 16.5H12.5" fill="none" stroke="#2c5b8a" stroke-width="0.94" stroke-linecap="round" stroke-linejoin="round"/><path d="M14 9.5H16" fill="none" stroke="#2c5b8a" stroke-width="1.02" stroke-linecap="round" stroke-linejoin="round"/></svg>
<div class="a" style="left:695px;top:579px;width:55px;height:32px;background:#f7f7f7;box-shadow:inset 0 0 0 1px #b8b8b8;border-radius:3px;"></div>
<svg class="a" style="left:701px;top:585px;" width="20" height="20" viewBox="0 0 20 20"><rect x="2" y="1" width="13" height="18" fill="none" stroke="#2c5b8a" stroke-width="1.10" stroke-linecap="round" stroke-linejoin="round"/><rect x="2" y="1" width="13" height="3.5" fill="#2c5b8a"/><path d="M4.5 7.5H12.5M4.5 10.5H7M4.5 13.5H7M4.5 16.5H7" fill="none" stroke="#2c5b8a" stroke-width="1.02" stroke-linecap="round" stroke-linejoin="round"/><circle cx="12" cy="14" r="3.2" fill="none" stroke="#2c5b8a" stroke-width="1.19" stroke-linecap="round" stroke-linejoin="round"/><path d="M14.3 16.3L18.5 19.5" fill="none" stroke="#2c5b8a" stroke-width="1.53" stroke-linecap="round" stroke-linejoin="round"/></svg>
<svg class="a" style="left:726px;top:591px;" width="16" height="9" viewBox="0 0 16 9"><path d="M1 1 L8 8 L15 1" fill="none" stroke="#3a5f86" stroke-width="1.19" stroke-linecap="round" stroke-linejoin="round"/></svg>
<div class="a" style="left:760px;top:579px;width:55px;height:32px;background:#f7f7f7;box-shadow:inset 0 0 0 1px #b8b8b8;border-radius:3px;"></div>
<svg class="a" style="left:766px;top:585px;" width="20" height="20" viewBox="0 0 20 20"><path d="M7 1.5H2V16H5" fill="none" stroke="#2c5b8a" stroke-width="1.10" stroke-linecap="round" stroke-linejoin="round"/><rect x="6" y="5" width="12" height="14" fill="none" stroke="#2c5b8a" stroke-width="1.10" stroke-linecap="round" stroke-linejoin="round"/><path d="M4 11H13M10 8L13 11L10 14" fill="none" stroke="#2c5b8a" stroke-width="1.10" stroke-linecap="round" stroke-linejoin="round"/></svg>
<svg class="a" style="left:791px;top:591px;" width="16" height="9" viewBox="0 0 16 9"><path d="M1 1 L8 8 L15 1" fill="none" stroke="#3a5f86" stroke-width="1.19" stroke-linecap="round" stroke-linejoin="round"/></svg>
<div class="a" style="left:825px;top:579px;width:60px;height:32px;background:#f7f7f7;box-shadow:inset 0 0 0 1px #b8b8b8;border-radius:3px;"></div>
<svg class="a" style="left:831px;top:585px;" width="20" height="20" viewBox="0 0 20 20"><path d="M1.5 1.5H16.5V9M1.5 1.5V16.5H9M1.5 6.5H16.5M1.5 11.5H9M6.5 1.5V16.5M11.5 1.5V9" fill="none" stroke="#2c5b8a" stroke-width="1.10" stroke-linecap="round" stroke-linejoin="round"/><circle cx="15" cy="15" r="2.6" fill="none" stroke="#2c5b8a" stroke-width="1.19" stroke-linecap="round" stroke-linejoin="round"/><path d="M15 10.5V11.8M15 18.2V19.5M10.5 15H11.8M18.2 15H19.5M11.8 11.8L12.7 12.7M17.3 17.3L18.2 18.2M11.8 18.2L12.7 17.3M17.3 12.7L18.2 11.8" fill="none" stroke="#2c5b8a" stroke-width="1.02" stroke-linecap="round" stroke-linejoin="round"/></svg>
<div class="a" style="left:855px;top:580px;width:1px;height:30px;background:#b8b8b8;"></div>
<svg class="a" style="left:862px;top:591px;" width="16" height="9" viewBox="0 0 16 9"><path d="M1 1 L8 8 L15 1" fill="none" stroke="#3a5f86" stroke-width="1.19" stroke-linecap="round" stroke-linejoin="round"/></svg>
<div class="a" style="left:897px;top:582px;width:1px;height:26px;background:#c3c7cb;"></div>
<div class="a" style="left:907px;top:579px;width:251px;height:32px;background:#f7f7f7;box-shadow:inset 0 0 0 1px #b8b8b8;border-radius:3px;"></div>
<div class="t " style="left:911.00px;top:587.19px;font-size:17.5px;color:#2f5a82;letter-spacing:0.275px;">Bezugsquelle zuordnen</div>
<svg class="a" style="left:1133px;top:591px;" width="16" height="9" viewBox="0 0 16 9"><path d="M1 1 L8 8 L15 1" fill="none" stroke="#3a5f86" stroke-width="1.19" stroke-linecap="round" stroke-linejoin="round"/></svg>
<div class="a" style="left:1169px;top:582px;width:1px;height:26px;background:#c3c7cb;"></div>
<div class="a" style="left:1179px;top:579px;width:149px;height:32px;background:#f7f7f7;box-shadow:inset 0 0 0 1px #b8b8b8;border-radius:3px;"></div>
<svg class="a" style="left:1187px;top:585px;" width="15" height="20" viewBox="0 0 15 20"><path d="M1.5 1V19" stroke="#2c5b8a" stroke-width="1.3"/><path d="M2 2H7L9 4H14V11H9L7 9H2Z" fill="#2e8b3a" stroke="#1d5f27" stroke-width="0.6"/></svg>
<div class="t " style="left:1207.00px;top:587.19px;font-size:17.5px;color:#2f5a82;letter-spacing:0.250px;">Banf-Freigabe</div>
<div class="a" style="left:1338px;top:582px;width:1px;height:26px;background:#c3c7cb;"></div>
<div class="a" style="left:1349px;top:579px;width:147px;height:32px;background:#f7f7f7;box-shadow:inset 0 0 0 1px #b8b8b8;border-radius:3px;"></div>
<div class="t " style="left:1353.00px;top:587.19px;font-size:17.5px;color:#2f5a82;letter-spacing:0.333px;">Bestellung</div>
<svg class="a" style="left:1471px;top:591px;" width="16" height="9" viewBox="0 0 16 9"><path d="M1 1 L8 8 L15 1" fill="none" stroke="#3a5f86" stroke-width="1.19" stroke-linecap="round" stroke-linejoin="round"/></svg>
<div class="a" style="left:1507px;top:582px;width:1px;height:26px;background:#c3c7cb;"></div>
<div class="a" style="left:1517px;top:579px;width:164px;height:32px;background:#f7f7f7;box-shadow:inset 0 0 0 1px #b8b8b8;border-radius:3px;"></div>
<svg class="a" style="left:1523px;top:586px;" width="18" height="18" viewBox="0 0 18 18"><path d="M1.5 1.5H13.5L16.5 4.5V16.5H1.5Z" fill="none" stroke="#2c5b8a" stroke-width="1.10" stroke-linecap="round" stroke-linejoin="round"/><path d="M4.5 1.5V6H12V1.5M4.5 16.5V10.5H13.5V16.5" fill="none" stroke="#2c5b8a" stroke-width="1.02" stroke-linecap="round" stroke-linejoin="round"/><rect x="8" y="12.5" width="3" height="3" fill="#2c5b8a"/></svg>
<div class="t " style="left:1545.00px;top:587.19px;font-size:17.5px;color:#2f5a82;letter-spacing:0.154px;">BANF speichern</div>
<div class="a" style="left:1692px;top:582px;width:1px;height:26px;background:#c3c7cb;"></div>
<div class="a" style="left:1702px;top:579px;width:149px;height:32px;background:#f7f7f7;box-shadow:inset 0 0 0 1px #b8b8b8;border-radius:3px;"></div>
<svg class="a" style="left:1708px;top:585px;" width="18" height="20" viewBox="0 0 18 20"><path d="M1 4H17M6 4V1.5H12V4M3 4L4.5 19H13.5L15 4" fill="none" stroke="#2c5b8a" stroke-width="1.10" stroke-linecap="round" stroke-linejoin="round"/><path d="M7 7V16M9 7V16M11 7V16" fill="none" stroke="#2c5b8a" stroke-width="0.85" stroke-linecap="round" stroke-linejoin="round"/></svg>
<div class="t " style="left:1730.00px;top:587.19px;font-size:17.5px;color:#2f5a82;letter-spacing:0.227px;">BANF löschen</div>
<div class="a" style="left:18px;top:629px;width:61px;height:32px;background:#f7f7f7;box-shadow:inset 0 0 0 1px #b8b8b8;border-radius:3px;"></div>
<svg class="a" style="left:24px;top:635px;" width="20" height="20" viewBox="0 0 20 20"><path d="M1 1H13.5L10 6.5H1Z" fill="#2c5b8a"/><text x="5.5" y="18.5" font-family="Liberation Serif" font-style="italic" font-size="16.5" fill="#2c5b8a">fx</text></svg>
<div class="a" style="left:48px;top:630px;width:1px;height:30px;background:#b8b8b8;"></div>
<svg class="a" style="left:55px;top:641px;" width="16" height="9" viewBox="0 0 16 9"><path d="M1 1 L8 8 L15 1" fill="none" stroke="#3a5f86" stroke-width="1.19" stroke-linecap="round" stroke-linejoin="round"/></svg>
<div class="a" style="left:17px;top:668px;width:1886px;height:288px;background:#f7f7f7;"></div>
<div class="a" style="left:17px;top:668px;width:1886px;height:1px;background:#e0e0e0;"></div>
<div class="a" style="left:17px;top:668px;width:1px;height:288px;background:#dcdcdc;"></div>
<div class="a" style="left:1902px;top:668px;width:1px;height:288px;background:#dcdcdc;"></div>
<div class="a" style="left:17px;top:707px;width:1885px;height:1px;background:#e2e2e2;"></div>
<div class="a" style="left:53px;top:708px;width:1849px;height:32px;background:#b80000;"></div>
<div class="a" style="left:17px;top:740px;width:1885px;height:1px;background:#e0e0e0;"></div>
<div class="a" style="left:25px;top:716px;width:16px;height:16px;background:#fff;box-shadow:inset 0 0 0 1px #c0c0c0;"></div>
<div class="a" style="left:53px;top:741px;width:1849px;height:32px;background:#b80000;"></div>
<div class="a" style="left:17px;top:773px;width:1885px;height:1px;background:#e0e0e0;"></div>
<div class="a" style="left:25px;top:749px;width:16px;height:16px;background:#fff;box-shadow:inset 0 0 0 1px #c0c0c0;"></div>
<div class="a" style="left:53px;top:774px;width:1849px;height:32px;background:#b80000;"></div>
<div class="a" style="left:17px;top:806px;width:1885px;height:1px;background:#e0e0e0;"></div>
<div class="a" style="left:25px;top:782px;width:16px;height:16px;background:#fff;box-shadow:inset 0 0 0 1px #c0c0c0;"></div>
<div class="a" style="left:53px;top:807px;width:1849px;height:32px;background:#b80000;"></div>
<div class="a" style="left:17px;top:839px;width:1885px;height:1px;background:#e0e0e0;"></div>
<div class="a" style="left:25px;top:815px;width:16px;height:16px;background:#fff;box-shadow:inset 0 0 0 1px #c0c0c0;"></div>
<div class="a" style="left:112px;top:668px;width:1px;height:40px;background:#dcdcdc;"></div>
<div class="a" style="left:112px;top:708px;width:1px;height:132px;background:#e8e8e8;"></div>
<div class="a" style="left:172px;top:668px;width:1px;height:40px;background:#dcdcdc;"></div>
<div class="a" style="left:172px;top:708px;width:1px;height:132px;background:#e8e8e8;"></div>
<div class="a" style="left:268px;top:668px;width:1px;height:40px;background:#dcdcdc;"></div>
<div class="a" style="left:268px;top:708px;width:1px;height:132px;background:#e8e8e8;"></div>
<div class="a" style="left:340px;top:668px;width:1px;height:40px;background:#dcdcdc;"></div>
<div class="a" style="left:340px;top:708px;width:1px;height:132px;background:#e8e8e8;"></div>
<div class="a" style="left:388px;top:668px;width:1px;height:40px;background:#dcdcdc;"></div>
<div class="a" style="left:388px;top:708px;width:1px;height:132px;background:#e8e8e8;"></div>
<div class="a" style="left:472px;top:668px;width:1px;height:40px;background:#dcdcdc;"></div>
<div class="a" style="left:472px;top:708px;width:1px;height:132px;background:#e8e8e8;"></div>
<div class="a" style="left:628px;top:668px;width:1px;height:40px;background:#dcdcdc;"></div>
<div class="a" style="left:628px;top:708px;width:1px;height:132px;background:#e8e8e8;"></div>
<div class="a" style="left:844px;top:668px;width:1px;height:40px;background:#dcdcdc;"></div>
<div class="a" style="left:844px;top:708px;width:1px;height:132px;background:#e8e8e8;"></div>
<div class="a" style="left:952px;top:668px;width:1px;height:40px;background:#dcdcdc;"></div>
<div class="a" style="left:952px;top:708px;width:1px;height:132px;background:#e8e8e8;"></div>
<div class="a" style="left:1048px;top:668px;width:1px;height:40px;background:#dcdcdc;"></div>
<div class="a" style="left:1048px;top:708px;width:1px;height:132px;background:#e8e8e8;"></div>
<div class="a" style="left:1120px;top:668px;width:1px;height:40px;background:#dcdcdc;"></div>
<div class="a" style="left:1120px;top:708px;width:1px;height:132px;background:#e8e8e8;"></div>
<div class="a" style="left:1192px;top:668px;width:1px;height:40px;background:#dcdcdc;"></div>
<div class="a" style="left:1192px;top:708px;width:1px;height:132px;background:#e8e8e8;"></div>
<div class="a" style="left:1240px;top:668px;width:1px;height:40px;background:#dcdcdc;"></div>
<div class="a" style="left:1240px;top:708px;width:1px;height:132px;background:#e8e8e8;"></div>
<div class="a" style="left:1288px;top:668px;width:1px;height:40px;background:#dcdcdc;"></div>
<div class="a" style="left:1288px;top:708px;width:1px;height:132px;background:#e8e8e8;"></div>
<div class="a" style="left:1324px;top:668px;width:1px;height:40px;background:#dcdcdc;"></div>
<div class="a" style="left:1324px;top:708px;width:1px;height:132px;background:#e8e8e8;"></div>
<div class="a" style="left:1360px;top:668px;width:1px;height:40px;background:#dcdcdc;"></div>
<div class="a" style="left:1360px;top:708px;width:1px;height:132px;background:#e8e8e8;"></div>
<div class="a" style="left:1396px;top:668px;width:1px;height:40px;background:#dcdcdc;"></div>
<div class="a" style="left:1396px;top:708px;width:1px;height:132px;background:#e8e8e8;"></div>
<div class="a" style="left:1456px;top:668px;width:1px;height:40px;background:#dcdcdc;"></div>
<div class="a" style="left:1456px;top:708px;width:1px;height:132px;background:#e8e8e8;"></div>
<div class="a" style="left:1528px;top:668px;width:1px;height:40px;background:#dcdcdc;"></div>
<div class="a" style="left:1528px;top:708px;width:1px;height:132px;background:#e8e8e8;"></div>
<div class="a" style="left:1588px;top:668px;width:1px;height:40px;background:#dcdcdc;"></div>
<div class="a" style="left:1588px;top:708px;width:1px;height:132px;background:#e8e8e8;"></div>
<div class="a" style="left:1636px;top:668px;width:1px;height:40px;background:#dcdcdc;"></div>
<div class="a" style="left:1636px;top:708px;width:1px;height:132px;background:#e8e8e8;"></div>
<div class="a" style="left:1756px;top:668px;width:1px;height:40px;background:#dcdcdc;"></div>
<div class="a" style="left:1756px;top:708px;width:1px;height:132px;background:#e8e8e8;"></div>
<div class="a" style="left:1840px;top:668px;width:1px;height:40px;background:#dcdcdc;"></div>
<div class="a" style="left:1840px;top:708px;width:1px;height:132px;background:#e8e8e8;"></div>
<div class="a" style="left:52px;top:669px;width:1px;height:170px;background:#6e6e6e;"></div>
<div class="a" style="left:53px;top:669px;width:1px;height:170px;background:#c8c8c8;"></div>
<div class="a" style="left:25px;top:679px;width:16px;height:16px;background:#fff;box-shadow:inset 0 0 0 1px #c0c0c0;"></div>
<div class="a" style="left:54px;top:708px;width:58px;height:32px;background:#e5edf7;"></div>
<div class="a" style="left:1121px;top:708px;width:71px;height:2px;background:#e9e9e9;"></div>
<div class="a" style="left:1121px;top:738px;width:71px;height:3px;background:#e9e9e9;"></div>
<div class="a" style="left:1121px;top:741px;width:71px;height:2px;background:#e9e9e9;"></div>
<div class="a" style="left:1121px;top:771px;width:71px;height:3px;background:#e9e9e9;"></div>
<div class="a" style="left:1121px;top:774px;width:71px;height:2px;background:#e9e9e9;"></div>
<div class="a" style="left:1121px;top:804px;width:71px;height:3px;background:#e9e9e9;"></div>
<div class="a" style="left:1121px;top:807px;width:71px;height:2px;background:#e9e9e9;"></div>
<div class="a" style="left:1121px;top:837px;width:71px;height:3px;background:#e9e9e9;"></div>
<div class="a" style="left:1397px;top:708px;width:59px;height:2px;background:#e9e9e9;"></div>
<div class="a" style="left:1397px;top:738px;width:59px;height:3px;background:#e9e9e9;"></div>
<div class="a" style="left:1397px;top:741px;width:59px;height:2px;background:#e9e9e9;"></div>
<div class="a" style="left:1397px;top:771px;width:59px;height:3px;background:#e9e9e9;"></div>
<div class="a" style="left:1397px;top:774px;width:59px;height:2px;background:#e9e9e9;"></div>
<div class="a" style="left:1397px;top:804px;width:59px;height:3px;background:#e9e9e9;"></div>
<div class="a" style="left:1397px;top:807px;width:59px;height:2px;background:#e9e9e9;"></div>
<div class="a" style="left:1397px;top:837px;width:59px;height:3px;background:#e9e9e9;"></div>
<div class="a" style="left:1457px;top:708px;width:71px;height:2px;background:#e9e9e9;"></div>
<div class="a" style="left:1457px;top:738px;width:71px;height:3px;background:#e9e9e9;"></div>
<div class="a" style="left:1457px;top:741px;width:71px;height:2px;background:#e9e9e9;"></div>
<div class="a" style="left:1457px;top:771px;width:71px;height:3px;background:#e9e9e9;"></div>
<div class="a" style="left:1457px;top:774px;width:71px;height:2px;background:#e9e9e9;"></div>
<div class="a" style="left:1457px;top:804px;width:71px;height:3px;background:#e9e9e9;"></div>
<div class="a" style="left:1457px;top:807px;width:71px;height:2px;background:#e9e9e9;"></div>
<div class="a" style="left:1457px;top:837px;width:71px;height:3px;background:#e9e9e9;"></div>
<div class="a" style="left:1529px;top:708px;width:59px;height:2px;background:#e9e9e9;"></div>
<div class="a" style="left:1529px;top:738px;width:59px;height:3px;background:#e9e9e9;"></div>
<div class="a" style="left:1529px;top:741px;width:59px;height:2px;background:#e9e9e9;"></div>
<div class="a" style="left:1529px;top:771px;width:59px;height:3px;background:#e9e9e9;"></div>
<div class="a" style="left:1529px;top:774px;width:59px;height:2px;background:#e9e9e9;"></div>
<div class="a" style="left:1529px;top:804px;width:59px;height:3px;background:#e9e9e9;"></div>
<div class="a" style="left:1529px;top:807px;width:59px;height:2px;background:#e9e9e9;"></div>
<div class="a" style="left:1529px;top:837px;width:59px;height:3px;background:#e9e9e9;"></div>
<div class="t b" style="left:56.00px;top:678.76px;font-size:18px;color:#000;">BATX</div>
<div class="t b" style="left:116.00px;top:678.76px;font-size:18px;color:#000;">Details</div>
<div class="t b" style="left:175.00px;top:678.76px;font-size:18px;color:#000;">MD04(Icon)</div>
<div class="t b" style="left:274.50px;top:678.76px;font-size:18px;color:#000;">Werk</div>
<div class="t b" style="left:343.50px;top:678.76px;font-size:18px;color:#000;">INFO</div>
<div class="t b" style="left:393.00px;top:678.76px;font-size:18px;color:#000;">Bestellu</div>
<div class="t b" style="left:476.50px;top:678.76px;font-size:18px;color:#000;">Material</div>
<div class="t b" style="left:632.00px;top:678.76px;font-size:18px;color:#000;">Kurztext</div>
<div class="t b" style="left:848.50px;top:678.76px;font-size:18px;color:#000;">Banf</div>
<div class="t b" style="left:959.00px;top:678.76px;font-size:18px;color:#000;">GXB (Icon)</div>
<div class="t b" style="left:1061.00px;top:678.76px;font-size:18px;color:#000;">Fixiert</div>
<div class="t b" style="left:1127.00px;top:678.76px;font-size:18px;color:#000;">Erledigt</div>
<div class="t b" style="left:1199.00px;top:678.76px;font-size:18px;color:#000;">Pos.</div>
<div class="t b" style="left:1245.00px;top:678.76px;font-size:18px;color:#000;">BArt</div>
<div class="t b" style="left:1295.00px;top:678.76px;font-size:18px;color:#000;">Typ</div>
<div class="t b" style="left:1330.00px;top:678.76px;font-size:18px;color:#000;">S</div>
<div class="t b" style="left:1365.00px;top:678.76px;font-size:18px;color:#000;">E</div>
<div class="t b" style="left:1401.00px;top:678.76px;font-size:18px;color:#000;">EKG</div>
<div class="t b" style="left:1461.00px;top:678.76px;font-size:18px;color:#000;">Lagerort</div>
<div class="t b" style="left:1531.00px;top:678.76px;font-size:18px;color:#000;">Men</div>
<div class="t b" style="left:1592.50px;top:678.76px;font-size:18px;color:#000;">ME</div>
<div class="t b" style="left:1641.00px;top:678.76px;font-size:18px;color:#000;">FreigDatum</div>
<div class="t b" style="left:1763.00px;top:678.76px;font-size:18px;color:#000;">Wunschlf</div>
<div class="t b" style="left:1845.00px;top:678.76px;font-size:18px;color:#000;">Fester</div>
<div class="a" style="left:103.0px;top:692px;width:1.5px;height:1.6px;background:#000;"></div>
<div class="a" style="left:106.3px;top:692px;width:1.5px;height:1.6px;background:#000;"></div>
<div class="a" style="left:109.6px;top:692px;width:1.5px;height:1.6px;background:#000;"></div>
<div class="a" style="left:457.0px;top:692px;width:1.5px;height:1.6px;background:#000;"></div>
<div class="a" style="left:460.3px;top:692px;width:1.5px;height:1.6px;background:#000;"></div>
<div class="a" style="left:463.6px;top:692px;width:1.5px;height:1.6px;background:#000;"></div>
<div class="a" style="left:1567.0px;top:692px;width:1.5px;height:1.6px;background:#000;"></div>
<div class="a" style="left:1570.3px;top:692px;width:1.5px;height:1.6px;background:#000;"></div>
<div class="a" style="left:1573.6px;top:692px;width:1.5px;height:1.6px;background:#000;"></div>
<svg class="a" style="left:609px;top:692px;" width="12" height="11" viewBox="0 0 12 11"><path d="M0 0H12L6 11Z" fill="#2c6aa3"/></svg>
<svg class="a" style="left:1739px;top:671px;" width="10" height="9" viewBox="0 0 10 9"><path d="M5 0L10 9H0Z" fill="#c00000"/></svg>
<svg class="a" style="left:135px;top:716px;" width="18" height="18" viewBox="0 0 18 18"><circle cx="7.5" cy="7.5" r="6" fill="none" stroke="#3a6d9a" stroke-width="1.3"/><path d="M4.5 7.5L6.8 9.8L10.5 5" fill="none" stroke="#3a6d9a" stroke-width="1.3"/><path d="M12 12L17 17" stroke="#3a6d9a" stroke-width="2"/></svg>
<svg class="a" style="left:214px;top:717px;" width="16" height="17" viewBox="0 0 16 17"><path d="M8 1L10.6 6.2Q8 7.2 5.4 6.2Z" fill="#3d6e98"/><path d="M4.5 8Q8 9.6 11.5 8L14.6 14.2Q8 17.8 1.4 14.2Z" fill="#3d6e98"/></svg>
<div class="t b" style="left:274.00px;top:714.76px;font-size:18px;color:#ffffff;">1010</div>
<div class="t u b" style="left:477.50px;top:714.76px;font-size:18px;color:#ffffff;">GB-RM-S100-01</div>
<div class="t b" style="left:634.00px;top:714.76px;font-size:18px;color:#ffffff;">Carbonrahmen</div>
<div class="t u b" style="left:849.50px;top:714.76px;font-size:18px;color:#ffffff;">17438301</div>
<svg class="a" style="left:992px;top:717px;" width="20" height="17" viewBox="0 0 20 17"><path d="M1.5 1.5H12V7.5H1.5ZM12 2.5H14.5A3.5 3.5 0 0 1 18 6V12H1.5V7.5" fill="none" stroke="#3d6a90" stroke-width="1.1"/><circle cx="6" cy="12.5" r="2.3" fill="#b80000" stroke="#3d6a90" stroke-width="1.1"/><circle cx="14" cy="12.5" r="2.3" fill="#b80000" stroke="#3d6a90" stroke-width="1.1"/></svg>
<div class="a" style="left:1076px;top:716px;width:17px;height:17px;background:#fff;"></div>
<div class="a" style="left:1148px;top:716px;width:17px;height:17px;background:#fff;"></div>
<div class="t b" style="left:1196.50px;top:714.76px;font-size:18px;color:#ffffff;">9000</div>
<div class="t b" style="left:1244.50px;top:714.76px;font-size:18px;color:#ffffff;">NB</div>
<div class="t b" style="left:1293.00px;top:714.76px;font-size:18px;color:#ffffff;">B</div>
<div class="t b" style="left:1329.00px;top:714.76px;font-size:18px;color:#ffffff;">N</div>
<div class="t b" style="left:1365.00px;top:714.76px;font-size:18px;color:#ffffff;">B</div>
<div class="t b" style="left:1402.00px;top:714.76px;font-size:18px;color:#ffffff;">101</div>
<div class="t b" style="left:1462.00px;top:714.76px;font-size:18px;color:#ffffff;">0200</div>
<div class="t b" style="left:1531.00px;top:714.76px;font-size:18px;color:#ffffff;">247,</div>
<div class="a" style="left:1567.0px;top:728px;width:1.5px;height:1.6px;background:#ffffff;"></div>
<div class="a" style="left:1570.3px;top:728px;width:1.5px;height:1.6px;background:#ffffff;"></div>
<div class="a" style="left:1573.6px;top:728px;width:1.5px;height:1.6px;background:#ffffff;"></div>
<div class="t b" style="left:1593.50px;top:714.76px;font-size:18px;color:#ffffff;">ST</div>
<div class="t b" style="left:1642.00px;top:714.76px;font-size:18px;color:#ffffff;">05.08.2022</div>
<div class="t b" style="left:1845.00px;top:714.76px;font-size:18px;color:#ffffff;">DESU_</div>
<svg class="a" style="left:135px;top:749px;" width="18" height="18" viewBox="0 0 18 18"><circle cx="7.5" cy="7.5" r="6" fill="none" stroke="#3a6d9a" stroke-width="1.3"/><path d="M4.5 7.5L6.8 9.8L10.5 5" fill="none" stroke="#3a6d9a" stroke-width="1.3"/><path d="M12 12L17 17" stroke="#3a6d9a" stroke-width="2"/></svg>
<svg class="a" style="left:214px;top:750px;" width="16" height="17" viewBox="0 0 16 17"><path d="M8 1L10.6 6.2Q8 7.2 5.4 6.2Z" fill="#3d6e98"/><path d="M4.5 8Q8 9.6 11.5 8L14.6 14.2Q8 17.8 1.4 14.2Z" fill="#3d6e98"/></svg>
<div class="t b" style="left:274.00px;top:747.76px;font-size:18px;color:#ffffff;">1010</div>
<div class="t u b" style="left:477.50px;top:747.76px;font-size:18px;color:#ffffff;">GB-RM-S100-01</div>
<div class="t b" style="left:634.00px;top:747.76px;font-size:18px;color:#ffffff;">Carbonrahmen</div>
<div class="t u b" style="left:849.50px;top:747.76px;font-size:18px;color:#ffffff;">17438302</div>
<svg class="a" style="left:992px;top:750px;" width="20" height="17" viewBox="0 0 20 17"><path d="M1.5 1.5H12V7.5H1.5ZM12 2.5H14.5A3.5 3.5 0 0 1 18 6V12H1.5V7.5" fill="none" stroke="#3d6a90" stroke-width="1.1"/><circle cx="6" cy="12.5" r="2.3" fill="#b80000" stroke="#3d6a90" stroke-width="1.1"/><circle cx="14" cy="12.5" r="2.3" fill="#b80000" stroke="#3d6a90" stroke-width="1.1"/></svg>
<div class="a" style="left:1076px;top:749px;width:17px;height:17px;background:#fff;"></div>
<div class="a" style="left:1148px;top:749px;width:17px;height:17px;background:#fff;"></div>
<div class="t b" style="left:1196.50px;top:747.76px;font-size:18px;color:#ffffff;">9000</div>
<div class="t b" style="left:1244.50px;top:747.76px;font-size:18px;color:#ffffff;">NB</div>
<div class="t b" style="left:1293.00px;top:747.76px;font-size:18px;color:#ffffff;">B</div>
<div class="t b" style="left:1329.00px;top:747.76px;font-size:18px;color:#ffffff;">N</div>
<div class="t b" style="left:1365.00px;top:747.76px;font-size:18px;color:#ffffff;">B</div>
<div class="t b" style="left:1402.00px;top:747.76px;font-size:18px;color:#ffffff;">101</div>
<div class="t b" style="left:1462.00px;top:747.76px;font-size:18px;color:#ffffff;">0200</div>
<div class="t b" style="right:341px;top:747.76px;font-size:18px;color:#fff">16,00</div>
<div class="t b" style="left:1593.50px;top:747.76px;font-size:18px;color:#ffffff;">ST</div>
<div class="t b" style="left:1642.00px;top:747.76px;font-size:18px;color:#ffffff;">15.08.2022</div>
<div class="t b" style="left:1845.00px;top:747.76px;font-size:18px;color:#ffffff;">DESU_</div>
<svg class="a" style="left:135px;top:782px;" width="18" height="18" viewBox="0 0 18 18"><circle cx="7.5" cy="7.5" r="6" fill="none" stroke="#3a6d9a" stroke-width="1.3"/><path d="M4.5 7.5L6.8 9.8L10.5 5" fill="none" stroke="#3a6d9a" stroke-width="1.3"/><path d="M12 12L17 17" stroke="#3a6d9a" stroke-width="2"/></svg>
<svg class="a" style="left:214px;top:783px;" width="16" height="17" viewBox="0 0 16 17"><path d="M8 1L10.6 6.2Q8 7.2 5.4 6.2Z" fill="#3d6e98"/><path d="M4.5 8Q8 9.6 11.5 8L14.6 14.2Q8 17.8 1.4 14.2Z" fill="#3d6e98"/></svg>
<div class="t b" style="left:274.00px;top:780.76px;font-size:18px;color:#ffffff;">1010</div>
<div class="t u b" style="left:477.50px;top:780.76px;font-size:18px;color:#ffffff;">GB-RM-S100-01</div>
<div class="t b" style="left:634.00px;top:780.76px;font-size:18px;color:#ffffff;">Carbonrahmen</div>
<div class="t u b" style="left:849.50px;top:780.76px;font-size:18px;color:#ffffff;">17438303</div>
<svg class="a" style="left:992px;top:783px;" width="20" height="17" viewBox="0 0 20 17"><path d="M1.5 1.5H12V7.5H1.5ZM12 2.5H14.5A3.5 3.5 0 0 1 18 6V12H1.5V7.5" fill="none" stroke="#3d6a90" stroke-width="1.1"/><circle cx="6" cy="12.5" r="2.3" fill="#b80000" stroke="#3d6a90" stroke-width="1.1"/><circle cx="14" cy="12.5" r="2.3" fill="#b80000" stroke="#3d6a90" stroke-width="1.1"/></svg>
<div class="a" style="left:1076px;top:782px;width:17px;height:17px;background:#fff;"></div>
<div class="a" style="left:1148px;top:782px;width:17px;height:17px;background:#fff;"></div>
<div class="t b" style="left:1196.50px;top:780.76px;font-size:18px;color:#ffffff;">9000</div>
<div class="t b" style="left:1244.50px;top:780.76px;font-size:18px;color:#ffffff;">NB</div>
<div class="t b" style="left:1293.00px;top:780.76px;font-size:18px;color:#ffffff;">B</div>
<div class="t b" style="left:1329.00px;top:780.76px;font-size:18px;color:#ffffff;">N</div>
<div class="t b" style="left:1365.00px;top:780.76px;font-size:18px;color:#ffffff;">B</div>
<div class="t b" style="left:1402.00px;top:780.76px;font-size:18px;color:#ffffff;">101</div>
<div class="t b" style="left:1462.00px;top:780.76px;font-size:18px;color:#ffffff;">0200</div>
<div class="t b" style="right:341px;top:780.76px;font-size:18px;color:#fff">13,00</div>
<div class="t b" style="left:1593.50px;top:780.76px;font-size:18px;color:#ffffff;">ST</div>
<div class="t b" style="left:1642.00px;top:780.76px;font-size:18px;color:#ffffff;">19.08.2022</div>
<div class="t b" style="left:1845.00px;top:780.76px;font-size:18px;color:#ffffff;">DESU_</div>
<svg class="a" style="left:135px;top:815px;" width="18" height="18" viewBox="0 0 18 18"><circle cx="7.5" cy="7.5" r="6" fill="none" stroke="#3a6d9a" stroke-width="1.3"/><path d="M4.5 7.5L6.8 9.8L10.5 5" fill="none" stroke="#3a6d9a" stroke-width="1.3"/><path d="M12 12L17 17" stroke="#3a6d9a" stroke-width="2"/></svg>
<svg class="a" style="left:214px;top:816px;" width="16" height="17" viewBox="0 0 16 17"><path d="M8 1L10.6 6.2Q8 7.2 5.4 6.2Z" fill="#3d6e98"/><path d="M4.5 8Q8 9.6 11.5 8L14.6 14.2Q8 17.8 1.4 14.2Z" fill="#3d6e98"/></svg>
<div class="t b" style="left:274.00px;top:813.76px;font-size:18px;color:#ffffff;">1010</div>
<div class="t u b" style="left:477.50px;top:813.76px;font-size:18px;color:#ffffff;">GB-RM-S100-01</div>
<div class="t b" style="left:634.00px;top:813.76px;font-size:18px;color:#ffffff;">Carbonrahmen</div>
<div class="t u b" style="left:849.50px;top:813.76px;font-size:18px;color:#ffffff;">17438304</div>
<svg class="a" style="left:992px;top:816px;" width="20" height="17" viewBox="0 0 20 17"><path d="M1.5 1.5H12V7.5H1.5ZM12 2.5H14.5A3.5 3.5 0 0 1 18 6V12H1.5V7.5" fill="none" stroke="#3d6a90" stroke-width="1.1"/><circle cx="6" cy="12.5" r="2.3" fill="#b80000" stroke="#3d6a90" stroke-width="1.1"/><circle cx="14" cy="12.5" r="2.3" fill="#b80000" stroke="#3d6a90" stroke-width="1.1"/></svg>
<div class="a" style="left:1076px;top:815px;width:17px;height:17px;background:#fff;"></div>
<div class="a" style="left:1148px;top:815px;width:17px;height:17px;background:#fff;"></div>
<div class="t b" style="left:1196.50px;top:813.76px;font-size:18px;color:#ffffff;">9000</div>
<div class="t b" style="left:1244.50px;top:813.76px;font-size:18px;color:#ffffff;">NB</div>
<div class="t b" style="left:1293.00px;top:813.76px;font-size:18px;color:#ffffff;">B</div>
<div class="t b" style="left:1329.00px;top:813.76px;font-size:18px;color:#ffffff;">N</div>
<div class="t b" style="left:1365.00px;top:813.76px;font-size:18px;color:#ffffff;">B</div>
<div class="t b" style="left:1402.00px;top:813.76px;font-size:18px;color:#ffffff;">101</div>
<div class="t b" style="left:1462.00px;top:813.76px;font-size:18px;color:#ffffff;">0200</div>
<div class="t b" style="right:341px;top:813.76px;font-size:18px;color:#fff">8,00</div>
<div class="t b" style="left:1593.50px;top:813.76px;font-size:18px;color:#ffffff;">ST</div>
<div class="t b" style="left:1642.00px;top:813.76px;font-size:18px;color:#ffffff;">26.08.2022</div>
<div class="t b" style="left:1845.00px;top:813.76px;font-size:18px;color:#ffffff;">DESU_</div>
<div class="a" style="left:1903px;top:700px;width:17px;height:145px;background:#eef3f8;"></div>
<div class="a" style="left:17px;top:935px;width:1886px;height:1px;background:#dcdcdc;"></div>
<div class="a" style="left:18px;top:936px;width:35px;height:19px;background:#eef3f8;"></div>
<div class="a" style="left:53px;top:938px;width:1849px;height:15px;background:#ffffff;"></div>
<div class="a" style="left:86px;top:938px;width:1217px;height:15px;background:#bdbdbd;"></div>
<div class="a" style="left:68px;top:938px;width:1px;height:15px;background:#eef3f8;"></div>
<div class="a" style="left:84px;top:938px;width:2px;height:15px;background:#eef3f8;"></div>
<svg class="a" style="left:57px;top:941px;" width="8" height="10" viewBox="0 0 8 10"><path d="M5.8 1.5L2.3 5.2L5.8 8.9" fill="none" stroke="#1f5f9e" stroke-width="1.49" stroke-linecap="round" stroke-linejoin="round"/></svg>
<svg class="a" style="left:73px;top:941px;" width="8" height="10" viewBox="0 0 8 10"><path d="M2.2 1.5L5.7 5.2L2.2 8.9" fill="none" stroke="#1f5f9e" stroke-width="1.49" stroke-linecap="round" stroke-linejoin="round"/></svg>
<div class="a" style="left:1868px;top:938px;width:1px;height:15px;background:#eef3f8;"></div>
<div class="a" style="left:1884px;top:938px;width:1px;height:15px;background:#eef3f8;"></div>
<svg class="a" style="left:1873px;top:941px;" width="8" height="10" viewBox="0 0 8 10"><path d="M5.8 1.5L2.3 5.2L5.8 8.9" fill="none" stroke="#1f5f9e" stroke-width="1.49" stroke-linecap="round" stroke-linejoin="round"/></svg>
<svg class="a" style="left:1889px;top:941px;" width="8" height="10" viewBox="0 0 8 10"><path d="M2.2 1.5L5.7 5.2L2.2 8.9" fill="none" stroke="#1f5f9e" stroke-width="1.49" stroke-linecap="round" stroke-linejoin="round"/></svg>
<div class="a" style="left:17px;top:955px;width:1886px;height:1px;background:#dcdcdc;"></div>
<div class="a" style="left:9px;top:970px;width:1902px;height:51px;background:#2f3a46;border-radius:5px;"></div>
<div class="a" style="left:1645px;top:978px;width:76px;height:35px;background:#5597d2;border-radius:2px;"></div>
<div class="t " style="left:1653.00px;top:987.19px;font-size:17.5px;color:#ffffff;letter-spacing:0.333px;">Sichern</div>
<div class="t " style="left:1739.50px;top:987.19px;font-size:17.5px;color:#d4e6f7;">Enter</div>
<div class="t " style="left:1808.50px;top:987.19px;font-size:17.5px;color:#d4e6f7;letter-spacing:0.125px;">Abbrechen</div>
</body></html>
